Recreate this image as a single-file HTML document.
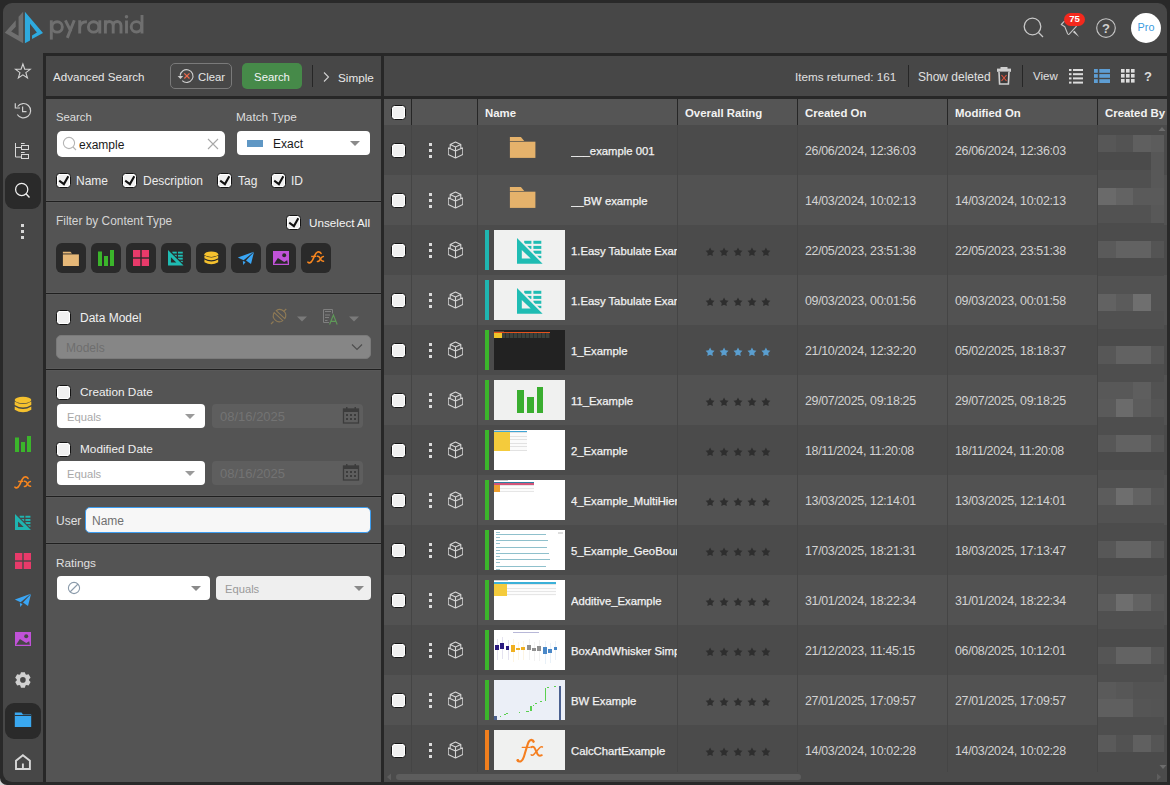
<!DOCTYPE html>
<html><head><meta charset="utf-8">
<style>
*{box-sizing:border-box;margin:0;padding:0}
html,body{width:1170px;height:785px;overflow:hidden;background:#d4d4d4;font-family:"Liberation Sans",sans-serif;font-size:12px;color:#e6e6e6}
.a{position:absolute}
#app{position:absolute;left:3px;top:3px;width:1164px;height:779px;background:#474747;border-radius:9px;overflow:hidden}
.t{position:absolute;white-space:nowrap;line-height:1}
.cb{position:absolute;width:15px;height:15px;margin:-1px 0 0 -1px;background:#f0f0f0;border:1.5px solid #141414;border-radius:3.5px;box-shadow:inset 0 0 0 1px #fff}
.ck{position:absolute;left:-1.5px;top:-1.5px}
.sep{position:absolute;background:#333}
</style></head><body>
<svg width="0" height="0" style="position:absolute"><defs><clipPath id="tabclip"><polygon points="2.4,0 26,0 26,23.6"/></clipPath></defs></svg>
<div class="a" style="left:0;top:0;width:1170px;height:785px;background:#292929;border-bottom-left-radius:7px"></div>
<div id="app"></div>

<!-- header -->
<svg class="a" style="left:0;top:0" width="50" height="50" viewBox="0 0 50 50">
  <path d="M4.8 32.7 L15.75 20.2 L15.75 26.85 L11.17 31.43 L18.56 35.76 L18.56 16.66 L23.14 11.82 L23.14 43.15 Z" fill="#6f6f6f"/>
  <path d="M24.9 11.8 L43 33 L32.06 39.07 L32.06 35.5 L36.9 32.45 L30 23.8 L30 40.6 L24.9 43.15 Z" fill="#2eaadf"/>
</svg>
<svg class="a" style="left:0;top:0" width="150" height="50" viewBox="0 0 150 50">
 <g fill="none" stroke="#6f6f6f" stroke-width="2.9">
  <path d="M51.3 20.3 V39.6"/><circle cx="57.15" cy="26.95" r="5.2"/>
  <path d="M65.4 20.3 L71 31.6 M74.3 20.3 L67.3 37.9"/>
  <path d="M79.7 20.3 V33.5 M79.7 28 C79.7 23.2 82.5 21.7 86.9 21.7"/>
  <circle cx="93.6" cy="26.95" r="5.2"/><path d="M99.8 20.3 V33.5"/>
  <path d="M105.4 20.3 V33.4 M105.4 25.4 A3.9 3.9 0 0 1 113.2 25.4 V33.4 M113.2 25.4 A3.9 3.9 0 0 1 121 25.4 V33.4"/>
  <path d="M126.5 20.5 V33.4"/>
  <circle cx="136.4" cy="26.85" r="5.2"/><path d="M142 15 V33.5"/>
 </g>
 <circle cx="126.5" cy="16.7" r="1.75" fill="#6f6f6f"/>
</svg>

<!-- header right icons -->
<svg class="a" style="left:1020px;top:14px" width="28" height="28" viewBox="0 0 28 28">
  <circle cx="12.5" cy="12.5" r="8.3" fill="none" stroke="#c8c8c8" stroke-width="1.3"/>
  <line x1="18.5" y1="18.5" x2="23" y2="23" stroke="#c8c8c8" stroke-width="1.3"/>
</svg>
<svg class="a" style="left:1056px;top:10px" width="34" height="30" viewBox="0 0 34 30">
  <path d="M8.5 11.2 L5.3 14.5 L8.8 16.8 L11.6 23.8 Q12.4 24.9 13.2 24.2 L20.6 16.2" fill="none" stroke="#c4c4c4" stroke-width="1.1" stroke-linejoin="round"/>
  <path d="M16.8 22 L18.6 20.8 L23.2 26.9 Z" fill="#d0d0d0"/>
</svg>
<div class="a" style="left:1064px;top:13px;width:21px;height:13px;border-radius:7px;background:#f3291d"></div>
<div class="t" style="left:1064px;top:14px;width:21px;text-align:center;font-size:9.6px;font-weight:bold;color:#fff">75</div>
<svg class="a" style="left:1094px;top:16px" width="24" height="24" viewBox="0 0 24 24">
  <circle cx="12" cy="12" r="9.3" fill="none" stroke="#c4c4c4" stroke-width="1.15"/>
</svg>
<div class="t" style="left:1094px;top:22px;width:24px;text-align:center;font-size:13px;font-weight:bold;color:#d0d0d0">?</div>
<div class="a" style="left:1131px;top:13px;width:30px;height:30px;border-radius:50%;background:#fff"></div>
<div class="t" style="left:1131px;top:22px;width:30px;text-align:center;font-size:10.8px;color:#3a9be0">Pro</div>


<!-- sidebar icons -->
<svg class="a" style="left:13px;top:61px" width="20" height="20" viewBox="0 0 20 20"><path d="M9.90 3.00 L11.72 8.19 L17.22 8.32 L12.85 11.66 L14.43 16.93 L9.90 13.80 L5.37 16.93 L6.95 11.66 L2.58 8.32 L8.08 8.19 Z" fill="none" stroke="#d4d4d4" stroke-width="1.1" stroke-linejoin="miter" stroke-miterlimit="10"/></svg>
<svg class="a" style="left:13px;top:101px" width="20" height="20" viewBox="0 0 20 20">
  <path d="M4.3 13.5 A7.2 7.2 0 1 0 4.6 5.5" fill="none" stroke="#d0d0d0" stroke-width="1.2"/>
  <path d="M2.3 2.3 L2.3 7 L7 7" fill="none" stroke="#d0d0d0" stroke-width="1.2"/>
  <path d="M9.6 5.5 L9.6 10.6 L13.5 10.6" fill="none" stroke="#d0d0d0" stroke-width="1.2"/>
</svg>
<svg class="a" style="left:13px;top:141px" width="20" height="20" viewBox="0 0 20 20">
  <path d="M2.5 2 L2.5 16 L8 16 M2.5 6.5 L8 6.5 M8 2.5 L11.7 2.5 M8 11.5 L11.7 11.5" fill="none" stroke="#d8d8d8" stroke-width="1"/>
  <rect x="8.5" y="4.5" width="7" height="4" fill="none" stroke="#d8d8d8" stroke-width="1"/>
  <rect x="8.5" y="13.5" width="7" height="4" fill="none" stroke="#d8d8d8" stroke-width="1"/>
</svg>
<div class="a" style="left:5px;top:173px;width:36px;height:36px;border-radius:9px;background:#2a2a2a"></div>
<svg class="a" style="left:13px;top:181px" width="20" height="20" viewBox="0 0 20 20">
  <circle cx="8.7" cy="8.4" r="6.1" fill="none" stroke="#f0f0f0" stroke-width="1.25"/>
  <line x1="13" y1="12.8" x2="16.5" y2="16.4" stroke="#f0f0f0" stroke-width="1.4"/>
</svg>
<div class="a" style="left:21px;top:224px;width:3px;height:3px;background:#d8d8d8"></div>
<div class="a" style="left:21px;top:230px;width:3px;height:3px;background:#d8d8d8"></div>
<div class="a" style="left:21px;top:236px;width:3px;height:3px;background:#d8d8d8"></div>

<svg class="a" style="left:13px;top:395px" width="20" height="20" viewBox="0 0 20 20">
  <ellipse cx="10" cy="5" rx="8.3" ry="3.3" fill="#f5c12e"/>
  <path d="M1.7 6.5 Q10 11.5 18.3 6.5 L18.3 10 Q10 15 1.7 10 Z" fill="#f5c12e"/>
  <path d="M1.7 11.5 Q10 16.5 18.3 11.5 L18.3 14.8 Q10 19.8 1.7 14.8 Z" fill="#f5c12e"/>
</svg>
<svg class="a" style="left:13px;top:434px" width="20" height="20" viewBox="0 0 20 20">
  <rect x="2" y="3.5" width="4" height="14.5" fill="#3bb52b"/>
  <rect x="8" y="8" width="4" height="10" fill="#3bb52b"/>
  <rect x="14" y="2" width="4" height="16" fill="#3bb52b"/>
</svg>
<svg class="a" style="left:10px;top:470px" width="26" height="26" viewBox="0 0 26 26">
  <path d="M5 17.2 Q6.2 18.6 8.2 17 Q9.6 15.6 11 12 Q12.8 7.6 14.6 7 Q16.8 6.4 18 8.4" fill="none" stroke="#f7861f" stroke-width="1.7" stroke-linecap="round"/>
  <path d="M8.2 11.5 L13.2 11.3" stroke="#f7861f" stroke-width="1.3"/>
  <path d="M14.3 11.3 Q16 10.6 17.2 13.5 Q18.6 16.8 20.6 16.3 M20.4 11.4 Q18.8 11.4 17.5 13.8 Q16 16.8 14.4 16.6" fill="none" stroke="#f7861f" stroke-width="1.5" stroke-linecap="round"/>
</svg>
<svg class="a" style="left:14.7px;top:514px" width="16.4" height="16.4" viewBox="0 0 25.8 25.8"><path d="M0 0 L0 25.65 L25.6 25.65 Z M4.8 12 L4.8 20.5 L13.7 20.5 Z" fill="#1fb5b0" fill-rule="evenodd"/><g clip-path="url(#tabclip)" fill="#1fb5b0"><rect x="7.2" y="2.8" width="7.2" height="3"/><rect x="16.4" y="2.8" width="7.9" height="3"/><rect x="7.2" y="7.9" width="7.2" height="3"/><rect x="16.4" y="7.9" width="7.9" height="3"/><rect x="7.2" y="12.7" width="7.2" height="3.1"/><rect x="16.4" y="12.7" width="7.9" height="3.1"/><rect x="7.2" y="17.8" width="7.2" height="2.4"/><rect x="16.4" y="17.8" width="7.9" height="2.4"/></g></svg>
<svg class="a" style="left:13px;top:551px" width="20" height="20" viewBox="0 0 20 20">
  <rect x="2" y="2" width="7.3" height="7.3" fill="#e83a6a"/>
  <rect x="10.7" y="2" width="7.3" height="7.3" fill="#e83a6a"/>
  <rect x="2" y="10.7" width="7.3" height="7.3" fill="#e83a6a"/>
  <rect x="10.7" y="10.7" width="7.3" height="7.3" fill="#e83a6a"/>
</svg>
<svg class="a" style="left:10px;top:585px" width="26" height="26" viewBox="0 0 26 26">
  <path d="M4.8 14.5 L20.8 8.8 L10.6 17.3 Z" fill="#3aa6f5"/>
  <path d="M13 17.6 L21 8.9 L18 21 Z" fill="#3aa6f5"/>
  <path d="M9.8 18.1 L12.6 19.1 L10.3 22 Z" fill="#3aa6f5"/>
</svg>
<svg class="a" style="left:10px;top:626px" width="26" height="26" viewBox="0 0 26 26">
  <rect x="5" y="6" width="16" height="14" fill="#c052d8"/>
  <path d="M6.1 18.7 L9.9 13.1 L16.2 16.9 L19.2 15.2 L19.9 18.7 Z" fill="#474747"/>
  <circle cx="16.2" cy="10.3" r="2" fill="#474747"/>
</svg>
<svg class="a" style="left:10px;top:666px" width="26" height="26" viewBox="0 0 26 26">
  <path d="M15.53 8.28 L14.84 6.14 L10.96 6.14 L10.27 8.28 L9.35 8.82 L7.15 8.34 L5.21 11.70 L6.72 13.37 L6.72 14.43 L5.21 16.10 L7.15 19.46 L9.35 18.98 L10.27 19.52 L10.96 21.66 L14.84 21.66 L15.53 19.52 L16.45 18.98 L18.65 19.46 L20.59 16.10 L19.08 14.43 L19.08 13.37 L20.59 11.70 L18.65 8.34 L16.45 8.82 Z M15.70 13.90 A2.8 2.8 0 1 0 10.10 13.90 A2.8 2.8 0 1 0 15.70 13.90 Z" fill="#d0d0d0" fill-rule="evenodd"/>
</svg>
<div class="a" style="left:5px;top:703px;width:36px;height:36px;border-radius:9px;background:#2a2a2a"></div>
<svg class="a" style="left:13px;top:710px" width="20" height="20" viewBox="0 0 20 20">
  <path d="M1.8 2.5 L8.5 2.5 L10 4.5 L18.2 4.5 L18.2 17 L1.8 17 Z" fill="#3aa8f0"/>
  <path d="M1.8 5.5 L18.2 5.5" stroke="#2a2a2a" stroke-width="0.9"/>
</svg>
<svg class="a" style="left:13px;top:752px" width="20" height="20" viewBox="0 0 20 20">
  <path d="M3 17 L3 8.7 L9.9 3.2 L16.9 8.7 L16.9 17 Z M9.9 17 L9.9 11.5" fill="none" stroke="#d8d8d8" stroke-width="1.9"/>
</svg>

<!-- dark separators -->
<div class="a" style="left:43px;top:53px;width:1124px;height:3px;background:#272727"></div>
<div class="a" style="left:43px;top:53px;width:3px;height:729px;background:#272727"></div>
<div class="a" style="left:381px;top:53px;width:3px;height:729px;background:#272727"></div>
<div class="a" style="left:43px;top:96px;width:1124px;height:3px;background:#272727"></div>

<!-- left toolbar -->
<div class="a" style="left:46px;top:56px;width:335px;height:40px;background:#474747"></div>
<div class="t" style="left:53px;top:71px;color:#e6e6e6;font-size:11.6px">Advanced Search</div>
<div class="a" style="left:170px;top:63px;width:62px;height:26px;border:1px solid #7a7a7a;border-radius:5px"></div>
<svg class="a" style="left:170px;top:63px" width="30" height="26" viewBox="0 0 30 26">
  <path d="M10.2 12.6 A6.4 6.4 0 1 1 12.2 17.7" fill="none" stroke="#cfcfcf" stroke-width="1.1"/>
  <path d="M7.6 13 L13.2 13 L10.5 16.1 Z" fill="#cfcfcf"/>
  <path d="M14.3 10.3 L19.5 15.5 M19.5 10.3 L14.3 15.5" stroke="#ef6a4c" stroke-width="1.2"/>
</svg>
<div class="t" style="left:198px;top:72px;font-size:11.3px;color:#e8e8e8">Clear</div>
<div class="a" style="left:242px;top:63px;width:60px;height:26px;background:#468a49;border-radius:5px"></div>
<div class="t" style="left:242px;top:72px;width:60px;text-align:center;font-size:11.3px;color:#f4f4f4">Search</div>
<div class="a" style="left:312px;top:65px;width:1px;height:22px;background:#262626"></div>
<svg class="a" style="left:320px;top:70px" width="12" height="14" viewBox="0 0 12 14">
  <path d="M4 2.5 L8.5 7 L4 11.5" fill="none" stroke="#d0d0d0" stroke-width="1.1"/>
</svg>
<div class="t" style="left:338px;top:72px;font-size:11.7px;color:#e8e8e8">Simple</div>

<!-- left panel -->
<div class="a" style="left:46px;top:99px;width:335px;height:683px;background:#545454"></div>
<div class="t" style="left:56px;top:112px;font-size:11.3px;color:#dedede">Search</div>
<div class="a" style="left:57px;top:131px;width:168px;height:26px;background:#fff;border-radius:5px"></div>
<svg class="a" style="left:61px;top:135px" width="18" height="18" viewBox="0 0 18 18">
  <circle cx="8" cy="8" r="5.6" fill="none" stroke="#b4b4b4" stroke-width="1.1"/>
  <line x1="12" y1="12" x2="15" y2="15" stroke="#b4b4b4" stroke-width="1.1"/>
</svg>
<div class="t" style="left:79px;top:139px;font-size:12px;color:#1a1a1a">example</div>
<svg class="a" style="left:206px;top:137px" width="14" height="14" viewBox="0 0 14 14">
  <path d="M2 2 L12 12 M12 2 L2 12" stroke="#a8a8a8" stroke-width="1.1"/>
</svg>
<div class="t" style="left:236px;top:112px;font-size:11.8px;color:#dedede">Match Type</div>
<div class="a" style="left:237px;top:131px;width:133px;height:24px;background:#fff;border-radius:4px"></div>
<div class="a" style="left:247px;top:140px;width:16px;height:7px;background:#5f97c4"></div>
<div class="t" style="left:273px;top:138px;font-size:12px;color:#1a1a1a">Exact</div>
<svg class="a" style="left:348px;top:139px" width="14" height="10" viewBox="0 0 14 10"><path d="M2 2 L12 2 L7 7 Z" fill="#8a8a8a"/></svg>

<div class="cb on" style="left:57px;top:174px"><svg class="ck" width="15" height="15" viewBox="0 0 15 15"><path d="M4.1 8.3 L7.9 11.1 L11.8 4.2" fill="none" stroke="#111" stroke-width="2.1" stroke-linecap="square"/></svg></div><div class="t" style="left:76px;top:175px;color:#ececec">Name</div>
<div class="cb on" style="left:123px;top:174px"><svg class="ck" width="15" height="15" viewBox="0 0 15 15"><path d="M4.1 8.3 L7.9 11.1 L11.8 4.2" fill="none" stroke="#111" stroke-width="2.1" stroke-linecap="square"/></svg></div><div class="t" style="left:143px;top:175px;color:#ececec">Description</div>
<div class="cb on" style="left:218px;top:174px"><svg class="ck" width="15" height="15" viewBox="0 0 15 15"><path d="M4.1 8.3 L7.9 11.1 L11.8 4.2" fill="none" stroke="#111" stroke-width="2.1" stroke-linecap="square"/></svg></div><div class="t" style="left:238px;top:175px;color:#ececec">Tag</div>
<div class="cb on" style="left:272px;top:174px"><svg class="ck" width="15" height="15" viewBox="0 0 15 15"><path d="M4.1 8.3 L7.9 11.1 L11.8 4.2" fill="none" stroke="#111" stroke-width="2.1" stroke-linecap="square"/></svg></div><div class="t" style="left:291px;top:175px;color:#ececec">ID</div>

<div class="a" style="left:46px;top:200px;width:335px;height:1px;background:#5a5a5a"></div><div class="sep" style="left:46px;top:201px;width:335px;height:1px;background:#1f1f1f"></div><div class="a" style="left:46px;top:202px;width:335px;height:1px;background:#585858"></div>
<div class="t" style="left:56px;top:216px;font-size:11.9px;color:#d4d4d4">Filter by Content Type</div>
<div class="cb on" style="left:287px;top:216px"><svg class="ck" width="15" height="15" viewBox="0 0 15 15"><path d="M4.1 8.3 L7.9 11.1 L11.8 4.2" fill="none" stroke="#111" stroke-width="2.1" stroke-linecap="square"/></svg></div><div class="t" style="left:309px;top:217px;font-size:11.7px;color:#f4f4f4">Unselect All</div>
<div class="a" style="left:56px;top:243px;width:30px;height:30px;border-radius:6px;background:#2a2a2a"></div>
<svg class="a" style="left:56px;top:243px" width="30" height="30" viewBox="0 0 30 30"><path d="M6.9 8.8 L14.4 8.8 L16 10.6 L6.9 10.6 Z" fill="#e6b878"/><rect x="6.9" y="11.4" width="16" height="11.6" fill="#e6b878"/></svg>
<div class="a" style="left:91px;top:243px;width:30px;height:30px;border-radius:6px;background:#2a2a2a"></div>
<svg class="a" style="left:96px;top:248px" width="20" height="20" viewBox="0 0 20 20"><rect x="2" y="3.5" width="4" height="14.5" fill="#3bb52b"/><rect x="8" y="8" width="4" height="10" fill="#3bb52b"/><rect x="14" y="2" width="4" height="16" fill="#3bb52b"/></svg>
<div class="a" style="left:126px;top:243px;width:30px;height:30px;border-radius:6px;background:#2a2a2a"></div>
<svg class="a" style="left:131px;top:248px" width="20" height="20" viewBox="0 0 20 20"><rect x="2" y="2" width="7.3" height="7.3" fill="#e83a6a"/><rect x="10.7" y="2" width="7.3" height="7.3" fill="#e83a6a"/><rect x="2" y="10.7" width="7.3" height="7.3" fill="#e83a6a"/><rect x="10.7" y="10.7" width="7.3" height="7.3" fill="#e83a6a"/></svg>
<div class="a" style="left:161px;top:243px;width:30px;height:30px;border-radius:6px;background:#2a2a2a"></div>
<svg class="a" style="left:168px;top:250.2px" width="15.7" height="15.7" viewBox="0 0 25.8 25.8"><path d="M0 0 L0 25.65 L25.6 25.65 Z M4.8 12 L4.8 20.5 L13.7 20.5 Z" fill="#1fbcb3" fill-rule="evenodd"/><g clip-path="url(#tabclip)" fill="#1fbcb3"><rect x="7.2" y="2.8" width="7.2" height="3"/><rect x="16.4" y="2.8" width="7.9" height="3"/><rect x="7.2" y="7.9" width="7.2" height="3"/><rect x="16.4" y="7.9" width="7.9" height="3"/><rect x="7.2" y="12.7" width="7.2" height="3.1"/><rect x="16.4" y="12.7" width="7.9" height="3.1"/><rect x="7.2" y="17.8" width="7.2" height="2.4"/><rect x="16.4" y="17.8" width="7.9" height="2.4"/></g></svg>
<div class="a" style="left:196px;top:243px;width:30px;height:30px;border-radius:6px;background:#2a2a2a"></div>
<svg class="a" style="left:202.9px;top:249.9px" width="16.6" height="16.6" viewBox="0 0 20 20"><ellipse cx="10" cy="5" rx="8.3" ry="3.3" fill="#f5c12e"/><path d="M1.7 6.5 Q10 11.5 18.3 6.5 L18.3 10 Q10 15 1.7 10 Z" fill="#f5c12e"/><path d="M1.7 11.5 Q10 16.5 18.3 11.5 L18.3 14.8 Q10 19.8 1.7 14.8 Z" fill="#f5c12e"/></svg>
<div class="a" style="left:231px;top:243px;width:30px;height:30px;border-radius:6px;background:#2a2a2a"></div>
<svg class="a" style="left:233px;top:243px" width="26" height="26" viewBox="0 0 26 26"><path d="M4.8 14.5 L20.8 8.8 L10.6 17.3 Z" fill="#3aa6f5"/><path d="M13 17.6 L21 8.9 L18 21 Z" fill="#3aa6f5"/><path d="M9.8 18.1 L12.6 19.1 L10.3 22 Z" fill="#3aa6f5"/></svg>
<div class="a" style="left:266px;top:243px;width:30px;height:30px;border-radius:6px;background:#2a2a2a"></div>
<svg class="a" style="left:268px;top:245px" width="26" height="26" viewBox="0 0 26 26"><rect x="5" y="6" width="16" height="14" fill="#c052d8"/><path d="M6.1 18.7 L9.9 13.1 L16.2 16.9 L19.2 15.2 L19.9 18.7 Z" fill="#2a2a2a"/><circle cx="16.2" cy="10.3" r="2" fill="#2a2a2a"/></svg>
<div class="a" style="left:301px;top:243px;width:30px;height:30px;border-radius:6px;background:#2a2a2a"></div>
<svg class="a" style="left:303px;top:245px" width="26" height="26" viewBox="0 0 26 26"><path d="M5 17.2 Q6.2 18.6 8.2 17 Q9.6 15.6 11 12 Q12.8 7.6 14.6 7 Q16.8 6.4 18 8.4" fill="none" stroke="#f7861f" stroke-width="1.7" stroke-linecap="round"/><path d="M8.2 11.5 L13.2 11.3" stroke="#f7861f" stroke-width="1.3"/><path d="M14.3 11.3 Q16 10.6 17.2 13.5 Q18.6 16.8 20.6 16.3 M20.4 11.4 Q18.8 11.4 17.5 13.8 Q16 16.8 14.4 16.6" fill="none" stroke="#f7861f" stroke-width="1.5" stroke-linecap="round"/></svg>

<div class="a" style="left:46px;top:292px;width:335px;height:1px;background:#5a5a5a"></div><div class="sep" style="left:46px;top:293px;width:335px;height:1px;background:#1f1f1f"></div><div class="a" style="left:46px;top:294px;width:335px;height:1px;background:#585858"></div>
<div class="cb" style="left:57px;top:311px"></div><div class="t" style="left:80px;top:312px;color:#f0f0f0">Data Model</div>
<svg class="a" style="left:266px;top:304px" width="26" height="26" viewBox="0 0 26 26">
  <g fill="none" stroke="#8f7a55" stroke-width="1.1">
  <path d="M8.2 8.6 A6 6 0 0 0 16.8 16.6 Z"/>
  <path d="M10.2 6.6 A6 6 0 0 1 18.8 14.6 Z"/>
  <path d="M17.5 7.5 L20.3 5 M7.5 17.5 L5 20"/>
  </g>
</svg>
<svg class="a" style="left:296px;top:315px" width="12" height="8" viewBox="0 0 12 8"><path d="M1 1.5 L11 1.5 L6 6.5 Z" fill="#7a7a7a"/></svg>
<svg class="a" style="left:321px;top:307px" width="18" height="19" viewBox="0 0 18 19">
  <g fill="none" stroke="#7f7f7f" stroke-width="1"><path d="M2.5 2.5 H11.5 V6.5 M2.5 2.5 V15.5 H8"/><path d="M4 4.5 H10 M4 8 H9 M4 10.5 H8 M4 13.5 H6.5"/></g>
  <path d="M8.6 17.5 L12.4 8 L16.2 17.5 M9.8 14.4 H15" fill="none" stroke="#5f9a58" stroke-width="1.1"/>
</svg>
<svg class="a" style="left:348px;top:315px" width="12" height="8" viewBox="0 0 12 8"><path d="M1 1.5 L11 1.5 L6 6.5 Z" fill="#7a7a7a"/></svg>
<div class="a" style="left:56px;top:335px;width:315px;height:24px;background:#868686;border-radius:5px;border:1px solid #7a7a7a"></div>
<div class="t" style="left:66px;top:342px;color:#6e6e6e">Models</div>
<svg class="a" style="left:349px;top:340px" width="16" height="14" viewBox="0 0 16 14"><path d="M3 4.5 L8 9.5 L13 4.5" fill="none" stroke="#4e4e4e" stroke-width="1.2"/></svg>

<div class="a" style="left:46px;top:368px;width:335px;height:1px;background:#5a5a5a"></div><div class="sep" style="left:46px;top:369px;width:335px;height:1px;background:#1f1f1f"></div><div class="a" style="left:46px;top:370px;width:335px;height:1px;background:#585858"></div>
<div class="cb" style="left:57px;top:386px"></div><div class="t" style="left:80px;top:387px;font-size:11.8px;color:#f0f0f0">Creation Date</div>
<div class="a" style="left:57px;top:404px;width:148px;height:24px;background:#fff;border-radius:4px"></div>
<div class="t" style="left:67px;top:412px;font-size:11.2px;color:#a8a8a8">Equals</div>
<svg class="a" style="left:183px;top:412px" width="14" height="10" viewBox="0 0 14 10"><path d="M2 2 L12 2 L7 7 Z" fill="#9a9a9a"/></svg>
<div class="a" style="left:212px;top:404px;width:151px;height:24px;background:#5e5e5e;border-radius:4px"></div>
<div class="t" style="left:220px;top:410px;font-size:13px;color:#737373">08/16/2025</div>
<svg class="a" style="left:342px;top:406px" width="18" height="18" viewBox="0 0 18 18">
  <g fill="#3c3c3c"><rect x="1.5" y="3" width="15" height="14" fill="none" stroke="#3c3c3c" stroke-width="1.3"/><rect x="1.5" y="3" width="15" height="3"/>
  <rect x="4" y="1" width="1.5" height="3"/><rect x="12.5" y="1" width="1.5" height="3"/>
  <rect x="4" y="8" width="2" height="2"/><rect x="8" y="8" width="2" height="2"/><rect x="12" y="8" width="2" height="2"/>
  <rect x="4" y="12" width="2" height="2"/><rect x="8" y="12" width="2" height="2"/><rect x="12" y="12" width="2" height="2"/></g>
</svg>
<div class="cb" style="left:57px;top:443px"></div><div class="t" style="left:80px;top:444px;font-size:11.8px;color:#f0f0f0">Modified Date</div>
<div class="a" style="left:57px;top:461px;width:148px;height:24px;background:#fff;border-radius:4px"></div>
<div class="t" style="left:67px;top:469px;font-size:11.2px;color:#a8a8a8">Equals</div>
<svg class="a" style="left:183px;top:469px" width="14" height="10" viewBox="0 0 14 10"><path d="M2 2 L12 2 L7 7 Z" fill="#9a9a9a"/></svg>
<div class="a" style="left:212px;top:461px;width:151px;height:24px;background:#5e5e5e;border-radius:4px"></div>
<div class="t" style="left:220px;top:467px;font-size:13px;color:#737373">08/16/2025</div>
<svg class="a" style="left:342px;top:463px" width="18" height="18" viewBox="0 0 18 18">
  <g fill="#3c3c3c"><rect x="1.5" y="3" width="15" height="14" fill="none" stroke="#3c3c3c" stroke-width="1.3"/><rect x="1.5" y="3" width="15" height="3"/>
  <rect x="4" y="1" width="1.5" height="3"/><rect x="12.5" y="1" width="1.5" height="3"/>
  <rect x="4" y="8" width="2" height="2"/><rect x="8" y="8" width="2" height="2"/><rect x="12" y="8" width="2" height="2"/>
  <rect x="4" y="12" width="2" height="2"/><rect x="8" y="12" width="2" height="2"/><rect x="12" y="12" width="2" height="2"/></g>
</svg>

<div class="a" style="left:46px;top:495px;width:335px;height:1px;background:#5a5a5a"></div><div class="sep" style="left:46px;top:496px;width:335px;height:1px;background:#1f1f1f"></div><div class="a" style="left:46px;top:497px;width:335px;height:1px;background:#585858"></div>
<div class="t" style="left:56px;top:515px;color:#e0e0e0">User</div>
<div class="a" style="left:85px;top:507px;width:286px;height:26px;background:#f7f7f7;border:1px solid #3d9df0;border-radius:5px"></div>
<div class="t" style="left:92px;top:515px;color:#707070">Name</div>

<div class="a" style="left:46px;top:542px;width:335px;height:1px;background:#5a5a5a"></div><div class="sep" style="left:46px;top:543px;width:335px;height:1px;background:#1f1f1f"></div><div class="a" style="left:46px;top:544px;width:335px;height:1px;background:#585858"></div>
<div class="t" style="left:56px;top:558px;font-size:11.8px;color:#e0e0e0">Ratings</div>
<div class="a" style="left:57px;top:576px;width:153px;height:24px;background:#fff;border-radius:4px"></div>
<svg class="a" style="left:66px;top:580px" width="16" height="16" viewBox="0 0 16 16"><circle cx="8" cy="8" r="5.6" fill="none" stroke="#8a9aaa" stroke-width="1.1"/><path d="M4 12 L12 4" stroke="#8a9aaa" stroke-width="1.1"/></svg>
<svg class="a" style="left:189px;top:584px" width="14" height="10" viewBox="0 0 14 10"><path d="M2 2 L12 2 L7 7 Z" fill="#8a8a8a"/></svg>
<div class="a" style="left:216px;top:576px;width:155px;height:24px;background:#efefef;border-radius:4px"></div>
<div class="t" style="left:225px;top:584px;font-size:11.2px;color:#9a9a9a">Equals</div>
<svg class="a" style="left:352px;top:584px" width="14" height="10" viewBox="0 0 14 10"><path d="M2 2 L12 2 L7 7 Z" fill="#8a8a8a"/></svg>


<!-- results toolbar -->
<div class="a" style="left:384px;top:56px;width:783px;height:40px;background:#474747"></div>
<div class="t" style="left:795px;top:71px;font-size:11.7px;color:#e0e0e0">Items returned: 161</div>
<div class="a" style="left:908px;top:65px;width:1px;height:22px;background:#262626"></div>
<div class="t" style="left:918px;top:71px;font-size:12px;color:#e0e0e0">Show deleted</div>
<svg class="a" style="left:996px;top:67px" width="16" height="18" viewBox="0 0 16 18">
  <rect x="1" y="1.6" width="14" height="3.2" fill="#cfcfcf"/>
  <rect x="4.5" y="0" width="7" height="2" fill="#cfcfcf"/>
  <path d="M3 4.8 L3.6 17 L12.4 17 L13 4.8" fill="#3a3a3a" stroke="#cfcfcf" stroke-width="1.6"/>
  <path d="M5.5 8 L10.5 14 M10.5 8 L5.5 14" stroke="#e0553f" stroke-width="1.1"/>
</svg>
<div class="a" style="left:1022px;top:65px;width:1px;height:22px;background:#262626"></div>
<div class="t" style="left:1033px;top:71px;font-size:11.5px;color:#e0e0e0">View</div>
<svg class="a" style="left:1068px;top:68px" width="16" height="16" viewBox="0 0 16 16">
  <g fill="#dcdcdc">
  <rect x="1" y="1" width="2.5" height="2"/><rect x="5" y="1" width="10" height="2"/>
  <rect x="1" y="5.2" width="2.5" height="2"/><rect x="5" y="5.2" width="10" height="2"/>
  <rect x="1" y="9.4" width="2.5" height="2"/><rect x="5" y="9.4" width="10" height="2"/>
  <rect x="1" y="13.6" width="2.5" height="2"/><rect x="5" y="13.6" width="10" height="2"/>
  </g>
</svg>
<svg class="a" style="left:1093px;top:68px" width="18" height="16" viewBox="0 0 18 16">
  <g fill="#5e9ed4">
  <rect x="1" y="1" width="3.8" height="3.8"/><rect x="6.3" y="1" width="10.7" height="3.8"/>
  <rect x="1" y="6.1" width="3.8" height="3.7"/><rect x="6.3" y="6.1" width="10.7" height="3.7"/>
  <rect x="1" y="11.2" width="3.8" height="3.8"/><rect x="6.3" y="11.2" width="10.7" height="3.8"/>
  </g>
</svg>
<svg class="a" style="left:1120px;top:68px" width="16" height="16" viewBox="0 0 16 16">
  <g fill="#dcdcdc">
  <rect x="1" y="1" width="3.6" height="3.6"/><rect x="6" y="1" width="3.6" height="3.6"/><rect x="11" y="1" width="3.6" height="3.6"/>
  <rect x="1" y="6" width="3.6" height="3.6"/><rect x="6" y="6" width="3.6" height="3.6"/><rect x="11" y="6" width="3.6" height="3.6"/>
  <rect x="1" y="11" width="3.6" height="3.6"/><rect x="6" y="11" width="3.6" height="3.6"/><rect x="11" y="11" width="3.6" height="3.6"/>
  </g>
</svg>
<div class="t" style="left:1144px;top:70px;font-size:13px;font-weight:bold;color:#dcdcdc">?</div>

<!-- table -->
<!--TABLE-->
<div class="a" style="left:384px;top:99px;width:783px;height:683px;background:#4c4c4c"></div>
<div class="a" style="left:384px;top:125px;width:783px;height:50px;background:#4b4b4b"></div>
<div class="a" style="left:384px;top:175px;width:783px;height:50px;background:#525252"></div>
<div class="a" style="left:384px;top:225px;width:783px;height:50px;background:#4b4b4b"></div>
<div class="a" style="left:384px;top:275px;width:783px;height:50px;background:#525252"></div>
<div class="a" style="left:384px;top:325px;width:783px;height:50px;background:#4b4b4b"></div>
<div class="a" style="left:384px;top:375px;width:783px;height:50px;background:#525252"></div>
<div class="a" style="left:384px;top:425px;width:783px;height:50px;background:#4b4b4b"></div>
<div class="a" style="left:384px;top:475px;width:783px;height:50px;background:#525252"></div>
<div class="a" style="left:384px;top:525px;width:783px;height:50px;background:#4b4b4b"></div>
<div class="a" style="left:384px;top:575px;width:783px;height:50px;background:#525252"></div>
<div class="a" style="left:384px;top:625px;width:783px;height:50px;background:#4b4b4b"></div>
<div class="a" style="left:384px;top:675px;width:783px;height:50px;background:#525252"></div>
<div class="a" style="left:384px;top:725px;width:783px;height:50px;background:#4b4b4b"></div>
<div class="a" style="left:411px;top:125px;width:1px;height:647px;background:#454545"></div>
<div class="a" style="left:477px;top:125px;width:1px;height:647px;background:#454545"></div>
<div class="a" style="left:677px;top:125px;width:1px;height:647px;background:#454545"></div>
<div class="a" style="left:797px;top:125px;width:1px;height:647px;background:#454545"></div>
<div class="a" style="left:947px;top:125px;width:1px;height:647px;background:#454545"></div>
<div class="a" style="left:1097px;top:125px;width:1px;height:647px;background:#454545"></div>
<div class="a" style="left:384px;top:99px;width:783px;height:26px;background:#555555"></div>
<div class="a" style="left:411px;top:99px;width:1px;height:26px;background:#262626"></div>
<div class="a" style="left:477px;top:99px;width:1px;height:26px;background:#262626"></div>
<div class="a" style="left:677px;top:99px;width:1px;height:26px;background:#262626"></div>
<div class="a" style="left:797px;top:99px;width:1px;height:26px;background:#262626"></div>
<div class="a" style="left:947px;top:99px;width:1px;height:26px;background:#262626"></div>
<div class="a" style="left:1097px;top:99px;width:1px;height:26px;background:#262626"></div>
<div class="cb" style="left:392px;top:106px"></div>
<div class="t" style="left:485px;top:108px;font-weight:bold;font-size:11.4px;color:#f2f2f2">Name</div>
<div class="t" style="left:685px;top:108px;font-weight:bold;font-size:11.4px;color:#f2f2f2">Overall Rating</div>
<div class="t" style="left:805px;top:108px;font-weight:bold;font-size:11.4px;color:#f2f2f2">Created On</div>
<div class="t" style="left:955px;top:108px;font-weight:bold;font-size:11.4px;color:#f2f2f2">Modified On</div>
<div class="t" style="left:1105px;top:108px;font-weight:bold;font-size:11.4px;color:#f2f2f2">Created By</div>
<div class="cb" style="left:392px;top:144px"></div>
<div class="a" style="left:429px;top:143px;width:3px;height:3px;background:#dcdcdc"></div><div class="a" style="left:429px;top:149px;width:3px;height:3px;background:#dcdcdc"></div><div class="a" style="left:429px;top:155px;width:3px;height:3px;background:#dcdcdc"></div>
<svg class="a" style="left:448px;top:141px" width="15" height="18" viewBox="0 0 15 18"><path d="M7.5 1.1 L12.8 3.6 L7.5 6.1 L2.2 3.6 Z M2.2 3.6 V7.4 M12.8 3.6 V7.4 M0.2 6.8 L7.5 10 L14.8 6.8 M0.2 6.8 V13.6 L7.5 16.9 L14.8 13.6 V6.8 M7.5 6.1 V16.9" fill="none" stroke="#d4d4d4" stroke-width="1.1" stroke-linejoin="round"/></svg>
<svg class="a" style="left:509px;top:136px" width="28" height="24" viewBox="0 0 28 24"><path d="M0.9 1.1 L11.9 1.1 L15.2 5 L0.9 5 Z" fill="#e5b26b"/><rect x="0.9" y="5.7" width="25.5" height="16.2" fill="#e5b26b"/></svg>
<div class="a" style="left:571px;top:146px;width:106px;height:16px;overflow:hidden"><div class="t" style="left:0;top:0;font-size:11.3px;color:#f2f2f2;-webkit-text-stroke:0.25px #f2f2f2">___example 001</div></div>
<div class="t" style="left:805px;top:145px;font-size:12.4px;letter-spacing:-0.32px;color:#d2d2d2">26/06/2024, 12:36:03</div>
<div class="t" style="left:955px;top:145px;font-size:12.4px;letter-spacing:-0.32px;color:#d2d2d2">26/06/2024, 12:36:03</div>
<div class="cb" style="left:392px;top:194px"></div>
<div class="a" style="left:429px;top:193px;width:3px;height:3px;background:#dcdcdc"></div><div class="a" style="left:429px;top:199px;width:3px;height:3px;background:#dcdcdc"></div><div class="a" style="left:429px;top:205px;width:3px;height:3px;background:#dcdcdc"></div>
<svg class="a" style="left:448px;top:191px" width="15" height="18" viewBox="0 0 15 18"><path d="M7.5 1.1 L12.8 3.6 L7.5 6.1 L2.2 3.6 Z M2.2 3.6 V7.4 M12.8 3.6 V7.4 M0.2 6.8 L7.5 10 L14.8 6.8 M0.2 6.8 V13.6 L7.5 16.9 L14.8 13.6 V6.8 M7.5 6.1 V16.9" fill="none" stroke="#d4d4d4" stroke-width="1.1" stroke-linejoin="round"/></svg>
<svg class="a" style="left:509px;top:186px" width="28" height="24" viewBox="0 0 28 24"><path d="M0.9 1.1 L11.9 1.1 L15.2 5 L0.9 5 Z" fill="#e5b26b"/><rect x="0.9" y="5.7" width="25.5" height="16.2" fill="#e5b26b"/></svg>
<div class="a" style="left:571px;top:196px;width:106px;height:16px;overflow:hidden"><div class="t" style="left:0;top:0;font-size:11.3px;color:#f2f2f2;-webkit-text-stroke:0.25px #f2f2f2">__BW example</div></div>
<div class="t" style="left:805px;top:195px;font-size:12.4px;letter-spacing:-0.32px;color:#d2d2d2">14/03/2024, 10:02:13</div>
<div class="t" style="left:955px;top:195px;font-size:12.4px;letter-spacing:-0.32px;color:#d2d2d2">14/03/2024, 10:02:13</div>
<div class="cb" style="left:392px;top:244px"></div>
<div class="a" style="left:429px;top:243px;width:3px;height:3px;background:#dcdcdc"></div><div class="a" style="left:429px;top:249px;width:3px;height:3px;background:#dcdcdc"></div><div class="a" style="left:429px;top:255px;width:3px;height:3px;background:#dcdcdc"></div>
<svg class="a" style="left:448px;top:241px" width="15" height="18" viewBox="0 0 15 18"><path d="M7.5 1.1 L12.8 3.6 L7.5 6.1 L2.2 3.6 Z M2.2 3.6 V7.4 M12.8 3.6 V7.4 M0.2 6.8 L7.5 10 L14.8 6.8 M0.2 6.8 V13.6 L7.5 16.9 L14.8 13.6 V6.8 M7.5 6.1 V16.9" fill="none" stroke="#d4d4d4" stroke-width="1.1" stroke-linejoin="round"/></svg>
<div class="a" style="left:485px;top:230px;width:4px;height:40px;background:#1fb5b0"></div>
<div class="a" style="left:494px;top:230px;width:71px;height:40px;background:#f0f1f0;overflow:hidden"><svg class="a" style="left:22.9px;top:7.6px" width="26" height="26" viewBox="0 0 26 26"><path d="M0 0 L0 25.65 L25.6 25.65 Z M4.8 12 L4.8 20.5 L13.7 20.5 Z" fill="#1fbcb3" fill-rule="evenodd"/><g clip-path="url(#tabclip)" fill="#1fbcb3"><rect x="7.2" y="2.8" width="7.2" height="3"/><rect x="16.4" y="2.8" width="7.9" height="3"/><rect x="7.2" y="7.9" width="7.2" height="3"/><rect x="16.4" y="7.9" width="7.9" height="3"/><rect x="7.2" y="12.7" width="7.2" height="3.1"/><rect x="16.4" y="12.7" width="7.9" height="3.1"/><rect x="7.2" y="17.8" width="7.2" height="2.4"/><rect x="16.4" y="17.8" width="7.9" height="2.4"/></g></svg></div>
<div class="a" style="left:571px;top:246px;width:106px;height:16px;overflow:hidden"><div class="t" style="left:0;top:0;font-size:11.3px;color:#f2f2f2;-webkit-text-stroke:0.25px #f2f2f2">1.Easy Tabulate Example</div></div>
<svg class="a" style="left:705px;top:247px" width="72" height="11" viewBox="0 0 72 11"><path d="M5.10 0.50 L6.54 3.22 L9.57 3.75 L7.43 5.96 L7.86 9.00 L5.10 7.65 L2.34 9.00 L2.77 5.96 L0.63 3.75 L3.66 3.22 Z" fill="#2e2e2e"/><path d="M19.05 0.50 L20.49 3.22 L23.52 3.75 L21.38 5.96 L21.81 9.00 L19.05 7.65 L16.29 9.00 L16.72 5.96 L14.58 3.75 L17.61 3.22 Z" fill="#2e2e2e"/><path d="M33.00 0.50 L34.44 3.22 L37.47 3.75 L35.33 5.96 L35.76 9.00 L33.00 7.65 L30.24 9.00 L30.67 5.96 L28.53 3.75 L31.56 3.22 Z" fill="#2e2e2e"/><path d="M46.95 0.50 L48.39 3.22 L51.42 3.75 L49.28 5.96 L49.71 9.00 L46.95 7.65 L44.19 9.00 L44.62 5.96 L42.48 3.75 L45.51 3.22 Z" fill="#2e2e2e"/><path d="M60.90 0.50 L62.34 3.22 L65.37 3.75 L63.23 5.96 L63.66 9.00 L60.90 7.65 L58.14 9.00 L58.57 5.96 L56.43 3.75 L59.46 3.22 Z" fill="#2e2e2e"/></svg>
<div class="t" style="left:805px;top:245px;font-size:12.4px;letter-spacing:-0.32px;color:#d2d2d2">22/05/2023, 23:51:38</div>
<div class="t" style="left:955px;top:245px;font-size:12.4px;letter-spacing:-0.32px;color:#d2d2d2">22/05/2023, 23:51:38</div>
<div class="cb" style="left:392px;top:294px"></div>
<div class="a" style="left:429px;top:293px;width:3px;height:3px;background:#dcdcdc"></div><div class="a" style="left:429px;top:299px;width:3px;height:3px;background:#dcdcdc"></div><div class="a" style="left:429px;top:305px;width:3px;height:3px;background:#dcdcdc"></div>
<svg class="a" style="left:448px;top:291px" width="15" height="18" viewBox="0 0 15 18"><path d="M7.5 1.1 L12.8 3.6 L7.5 6.1 L2.2 3.6 Z M2.2 3.6 V7.4 M12.8 3.6 V7.4 M0.2 6.8 L7.5 10 L14.8 6.8 M0.2 6.8 V13.6 L7.5 16.9 L14.8 13.6 V6.8 M7.5 6.1 V16.9" fill="none" stroke="#d4d4d4" stroke-width="1.1" stroke-linejoin="round"/></svg>
<div class="a" style="left:485px;top:280px;width:4px;height:40px;background:#1fb5b0"></div>
<div class="a" style="left:494px;top:280px;width:71px;height:40px;background:#f0f1f0;overflow:hidden"><svg class="a" style="left:22.9px;top:7.6px" width="26" height="26" viewBox="0 0 26 26"><path d="M0 0 L0 25.65 L25.6 25.65 Z M4.8 12 L4.8 20.5 L13.7 20.5 Z" fill="#1fbcb3" fill-rule="evenodd"/><g clip-path="url(#tabclip)" fill="#1fbcb3"><rect x="7.2" y="2.8" width="7.2" height="3"/><rect x="16.4" y="2.8" width="7.9" height="3"/><rect x="7.2" y="7.9" width="7.2" height="3"/><rect x="16.4" y="7.9" width="7.9" height="3"/><rect x="7.2" y="12.7" width="7.2" height="3.1"/><rect x="16.4" y="12.7" width="7.9" height="3.1"/><rect x="7.2" y="17.8" width="7.2" height="2.4"/><rect x="16.4" y="17.8" width="7.9" height="2.4"/></g></svg></div>
<div class="a" style="left:571px;top:296px;width:106px;height:16px;overflow:hidden"><div class="t" style="left:0;top:0;font-size:11.3px;color:#f2f2f2;-webkit-text-stroke:0.25px #f2f2f2">1.Easy Tabulate Example</div></div>
<svg class="a" style="left:705px;top:297px" width="72" height="11" viewBox="0 0 72 11"><path d="M5.10 0.50 L6.54 3.22 L9.57 3.75 L7.43 5.96 L7.86 9.00 L5.10 7.65 L2.34 9.00 L2.77 5.96 L0.63 3.75 L3.66 3.22 Z" fill="#2e2e2e"/><path d="M19.05 0.50 L20.49 3.22 L23.52 3.75 L21.38 5.96 L21.81 9.00 L19.05 7.65 L16.29 9.00 L16.72 5.96 L14.58 3.75 L17.61 3.22 Z" fill="#2e2e2e"/><path d="M33.00 0.50 L34.44 3.22 L37.47 3.75 L35.33 5.96 L35.76 9.00 L33.00 7.65 L30.24 9.00 L30.67 5.96 L28.53 3.75 L31.56 3.22 Z" fill="#2e2e2e"/><path d="M46.95 0.50 L48.39 3.22 L51.42 3.75 L49.28 5.96 L49.71 9.00 L46.95 7.65 L44.19 9.00 L44.62 5.96 L42.48 3.75 L45.51 3.22 Z" fill="#2e2e2e"/><path d="M60.90 0.50 L62.34 3.22 L65.37 3.75 L63.23 5.96 L63.66 9.00 L60.90 7.65 L58.14 9.00 L58.57 5.96 L56.43 3.75 L59.46 3.22 Z" fill="#2e2e2e"/></svg>
<div class="t" style="left:805px;top:295px;font-size:12.4px;letter-spacing:-0.32px;color:#d2d2d2">09/03/2023, 00:01:56</div>
<div class="t" style="left:955px;top:295px;font-size:12.4px;letter-spacing:-0.32px;color:#d2d2d2">09/03/2023, 00:01:58</div>
<div class="cb" style="left:392px;top:344px"></div>
<div class="a" style="left:429px;top:343px;width:3px;height:3px;background:#dcdcdc"></div><div class="a" style="left:429px;top:349px;width:3px;height:3px;background:#dcdcdc"></div><div class="a" style="left:429px;top:355px;width:3px;height:3px;background:#dcdcdc"></div>
<svg class="a" style="left:448px;top:341px" width="15" height="18" viewBox="0 0 15 18"><path d="M7.5 1.1 L12.8 3.6 L7.5 6.1 L2.2 3.6 Z M2.2 3.6 V7.4 M12.8 3.6 V7.4 M0.2 6.8 L7.5 10 L14.8 6.8 M0.2 6.8 V13.6 L7.5 16.9 L14.8 13.6 V6.8 M7.5 6.1 V16.9" fill="none" stroke="#d4d4d4" stroke-width="1.1" stroke-linejoin="round"/></svg>
<div class="a" style="left:485px;top:330px;width:4px;height:40px;background:#3bb52b"></div>
<div class="a" style="left:494px;top:330px;width:71px;height:40px;background:#222222;overflow:hidden"><div class="a" style="left:0px;top:1px;width:10px;height:1px;background:#5a4a3a"></div><div class="a" style="left:0px;top:2px;width:56px;height:1.3px;background:#e5521c"></div><div class="a" style="left:0px;top:3.2px;width:8px;height:5px;background:#efc52a"></div><div class="a" style="left:8px;top:3.2px;width:48px;height:5px;background:repeating-linear-gradient(90deg,#3c423c 0 3px,#2c2f2c 3px 4px)"></div></div>
<div class="a" style="left:571px;top:346px;width:106px;height:16px;overflow:hidden"><div class="t" style="left:0;top:0;font-size:11.3px;color:#f2f2f2;-webkit-text-stroke:0.25px #f2f2f2">1_Example</div></div>
<svg class="a" style="left:705px;top:347px" width="72" height="11" viewBox="0 0 72 11"><path d="M5.10 0.50 L6.54 3.22 L9.57 3.75 L7.43 5.96 L7.86 9.00 L5.10 7.65 L2.34 9.00 L2.77 5.96 L0.63 3.75 L3.66 3.22 Z" fill="#5a9ecf"/><path d="M19.05 0.50 L20.49 3.22 L23.52 3.75 L21.38 5.96 L21.81 9.00 L19.05 7.65 L16.29 9.00 L16.72 5.96 L14.58 3.75 L17.61 3.22 Z" fill="#5a9ecf"/><path d="M33.00 0.50 L34.44 3.22 L37.47 3.75 L35.33 5.96 L35.76 9.00 L33.00 7.65 L30.24 9.00 L30.67 5.96 L28.53 3.75 L31.56 3.22 Z" fill="#5a9ecf"/><path d="M46.95 0.50 L48.39 3.22 L51.42 3.75 L49.28 5.96 L49.71 9.00 L46.95 7.65 L44.19 9.00 L44.62 5.96 L42.48 3.75 L45.51 3.22 Z" fill="#5a9ecf"/><path d="M60.90 0.50 L62.34 3.22 L65.37 3.75 L63.23 5.96 L63.66 9.00 L60.90 7.65 L58.14 9.00 L58.57 5.96 L56.43 3.75 L59.46 3.22 Z" fill="#5a9ecf"/></svg>
<div class="t" style="left:805px;top:345px;font-size:12.4px;letter-spacing:-0.32px;color:#d2d2d2">21/10/2024, 12:32:20</div>
<div class="t" style="left:955px;top:345px;font-size:12.4px;letter-spacing:-0.32px;color:#d2d2d2">05/02/2025, 18:18:37</div>
<div class="cb" style="left:392px;top:394px"></div>
<div class="a" style="left:429px;top:393px;width:3px;height:3px;background:#dcdcdc"></div><div class="a" style="left:429px;top:399px;width:3px;height:3px;background:#dcdcdc"></div><div class="a" style="left:429px;top:405px;width:3px;height:3px;background:#dcdcdc"></div>
<svg class="a" style="left:448px;top:391px" width="15" height="18" viewBox="0 0 15 18"><path d="M7.5 1.1 L12.8 3.6 L7.5 6.1 L2.2 3.6 Z M2.2 3.6 V7.4 M12.8 3.6 V7.4 M0.2 6.8 L7.5 10 L14.8 6.8 M0.2 6.8 V13.6 L7.5 16.9 L14.8 13.6 V6.8 M7.5 6.1 V16.9" fill="none" stroke="#d4d4d4" stroke-width="1.1" stroke-linejoin="round"/></svg>
<div class="a" style="left:485px;top:380px;width:4px;height:40px;background:#3bb52b"></div>
<div class="a" style="left:494px;top:380px;width:71px;height:40px;background:#f0f1f0;overflow:hidden"><div class="a" style="left:23px;top:10px;width:6.5px;height:23px;background:#3aae30"></div><div class="a" style="left:33px;top:16.5px;width:6.5px;height:16.5px;background:#3aae30"></div><div class="a" style="left:42.5px;top:7px;width:6.5px;height:26px;background:#3aae30"></div></div>
<div class="a" style="left:571px;top:396px;width:106px;height:16px;overflow:hidden"><div class="t" style="left:0;top:0;font-size:11.3px;color:#f2f2f2;-webkit-text-stroke:0.25px #f2f2f2">11_Example</div></div>
<svg class="a" style="left:705px;top:397px" width="72" height="11" viewBox="0 0 72 11"><path d="M5.10 0.50 L6.54 3.22 L9.57 3.75 L7.43 5.96 L7.86 9.00 L5.10 7.65 L2.34 9.00 L2.77 5.96 L0.63 3.75 L3.66 3.22 Z" fill="#2e2e2e"/><path d="M19.05 0.50 L20.49 3.22 L23.52 3.75 L21.38 5.96 L21.81 9.00 L19.05 7.65 L16.29 9.00 L16.72 5.96 L14.58 3.75 L17.61 3.22 Z" fill="#2e2e2e"/><path d="M33.00 0.50 L34.44 3.22 L37.47 3.75 L35.33 5.96 L35.76 9.00 L33.00 7.65 L30.24 9.00 L30.67 5.96 L28.53 3.75 L31.56 3.22 Z" fill="#2e2e2e"/><path d="M46.95 0.50 L48.39 3.22 L51.42 3.75 L49.28 5.96 L49.71 9.00 L46.95 7.65 L44.19 9.00 L44.62 5.96 L42.48 3.75 L45.51 3.22 Z" fill="#2e2e2e"/><path d="M60.90 0.50 L62.34 3.22 L65.37 3.75 L63.23 5.96 L63.66 9.00 L60.90 7.65 L58.14 9.00 L58.57 5.96 L56.43 3.75 L59.46 3.22 Z" fill="#2e2e2e"/></svg>
<div class="t" style="left:805px;top:395px;font-size:12.4px;letter-spacing:-0.32px;color:#d2d2d2">29/07/2025, 09:18:25</div>
<div class="t" style="left:955px;top:395px;font-size:12.4px;letter-spacing:-0.32px;color:#d2d2d2">29/07/2025, 09:18:25</div>
<div class="cb" style="left:392px;top:444px"></div>
<div class="a" style="left:429px;top:443px;width:3px;height:3px;background:#dcdcdc"></div><div class="a" style="left:429px;top:449px;width:3px;height:3px;background:#dcdcdc"></div><div class="a" style="left:429px;top:455px;width:3px;height:3px;background:#dcdcdc"></div>
<svg class="a" style="left:448px;top:441px" width="15" height="18" viewBox="0 0 15 18"><path d="M7.5 1.1 L12.8 3.6 L7.5 6.1 L2.2 3.6 Z M2.2 3.6 V7.4 M12.8 3.6 V7.4 M0.2 6.8 L7.5 10 L14.8 6.8 M0.2 6.8 V13.6 L7.5 16.9 L14.8 13.6 V6.8 M7.5 6.1 V16.9" fill="none" stroke="#d4d4d4" stroke-width="1.1" stroke-linejoin="round"/></svg>
<div class="a" style="left:485px;top:430px;width:4px;height:40px;background:#3bb52b"></div>
<div class="a" style="left:494px;top:430px;width:71px;height:40px;background:#ffffff;overflow:hidden"><div class="a" style="left:0px;top:0px;width:16px;height:0.8px;background:#cfcfcf"></div><div class="a" style="left:0px;top:1.4px;width:32.8px;height:1px;background:#3fa6d6"></div><div class="a" style="left:0px;top:2.4px;width:15.7px;height:18.6px;background:#f4cb3c"></div><div class="a" style="left:15.7px;top:2.4px;width:17px;height:18.6px;background:repeating-linear-gradient(#e2e2e2 0 1px,#fbfbfb 1px 3.6px)"></div></div>
<div class="a" style="left:571px;top:446px;width:106px;height:16px;overflow:hidden"><div class="t" style="left:0;top:0;font-size:11.3px;color:#f2f2f2;-webkit-text-stroke:0.25px #f2f2f2">2_Example</div></div>
<svg class="a" style="left:705px;top:447px" width="72" height="11" viewBox="0 0 72 11"><path d="M5.10 0.50 L6.54 3.22 L9.57 3.75 L7.43 5.96 L7.86 9.00 L5.10 7.65 L2.34 9.00 L2.77 5.96 L0.63 3.75 L3.66 3.22 Z" fill="#2e2e2e"/><path d="M19.05 0.50 L20.49 3.22 L23.52 3.75 L21.38 5.96 L21.81 9.00 L19.05 7.65 L16.29 9.00 L16.72 5.96 L14.58 3.75 L17.61 3.22 Z" fill="#2e2e2e"/><path d="M33.00 0.50 L34.44 3.22 L37.47 3.75 L35.33 5.96 L35.76 9.00 L33.00 7.65 L30.24 9.00 L30.67 5.96 L28.53 3.75 L31.56 3.22 Z" fill="#2e2e2e"/><path d="M46.95 0.50 L48.39 3.22 L51.42 3.75 L49.28 5.96 L49.71 9.00 L46.95 7.65 L44.19 9.00 L44.62 5.96 L42.48 3.75 L45.51 3.22 Z" fill="#2e2e2e"/><path d="M60.90 0.50 L62.34 3.22 L65.37 3.75 L63.23 5.96 L63.66 9.00 L60.90 7.65 L58.14 9.00 L58.57 5.96 L56.43 3.75 L59.46 3.22 Z" fill="#2e2e2e"/></svg>
<div class="t" style="left:805px;top:445px;font-size:12.4px;letter-spacing:-0.32px;color:#d2d2d2">18/11/2024, 11:20:08</div>
<div class="t" style="left:955px;top:445px;font-size:12.4px;letter-spacing:-0.32px;color:#d2d2d2">18/11/2024, 11:20:08</div>
<div class="cb" style="left:392px;top:494px"></div>
<div class="a" style="left:429px;top:493px;width:3px;height:3px;background:#dcdcdc"></div><div class="a" style="left:429px;top:499px;width:3px;height:3px;background:#dcdcdc"></div><div class="a" style="left:429px;top:505px;width:3px;height:3px;background:#dcdcdc"></div>
<svg class="a" style="left:448px;top:491px" width="15" height="18" viewBox="0 0 15 18"><path d="M7.5 1.1 L12.8 3.6 L7.5 6.1 L2.2 3.6 Z M2.2 3.6 V7.4 M12.8 3.6 V7.4 M0.2 6.8 L7.5 10 L14.8 6.8 M0.2 6.8 V13.6 L7.5 16.9 L14.8 13.6 V6.8 M7.5 6.1 V16.9" fill="none" stroke="#d4d4d4" stroke-width="1.1" stroke-linejoin="round"/></svg>
<div class="a" style="left:485px;top:480px;width:4px;height:40px;background:#3bb52b"></div>
<div class="a" style="left:494px;top:480px;width:71px;height:40px;background:#ffffff;overflow:hidden"><div class="a" style="left:0px;top:0px;width:14px;height:0.8px;background:#cfcfcf"></div><div class="a" style="left:0px;top:2px;width:40px;height:1.4px;background:#2d7fa2"></div><div class="a" style="left:0px;top:3.4px;width:40px;height:1.4px;background:#d35478"></div><div class="a" style="left:0px;top:4.8px;width:6px;height:7.5px;background:#f0a030"></div><div class="a" style="left:6px;top:4.8px;width:34px;height:7.5px;background:repeating-linear-gradient(#e6e6e6 0 1px,#fcfcfc 1px 3px)"></div></div>
<div class="a" style="left:571px;top:496px;width:106px;height:16px;overflow:hidden"><div class="t" style="left:0;top:0;font-size:11.3px;color:#f2f2f2;-webkit-text-stroke:0.25px #f2f2f2">4_Example_MultiHierarchy</div></div>
<svg class="a" style="left:705px;top:497px" width="72" height="11" viewBox="0 0 72 11"><path d="M5.10 0.50 L6.54 3.22 L9.57 3.75 L7.43 5.96 L7.86 9.00 L5.10 7.65 L2.34 9.00 L2.77 5.96 L0.63 3.75 L3.66 3.22 Z" fill="#2e2e2e"/><path d="M19.05 0.50 L20.49 3.22 L23.52 3.75 L21.38 5.96 L21.81 9.00 L19.05 7.65 L16.29 9.00 L16.72 5.96 L14.58 3.75 L17.61 3.22 Z" fill="#2e2e2e"/><path d="M33.00 0.50 L34.44 3.22 L37.47 3.75 L35.33 5.96 L35.76 9.00 L33.00 7.65 L30.24 9.00 L30.67 5.96 L28.53 3.75 L31.56 3.22 Z" fill="#2e2e2e"/><path d="M46.95 0.50 L48.39 3.22 L51.42 3.75 L49.28 5.96 L49.71 9.00 L46.95 7.65 L44.19 9.00 L44.62 5.96 L42.48 3.75 L45.51 3.22 Z" fill="#2e2e2e"/><path d="M60.90 0.50 L62.34 3.22 L65.37 3.75 L63.23 5.96 L63.66 9.00 L60.90 7.65 L58.14 9.00 L58.57 5.96 L56.43 3.75 L59.46 3.22 Z" fill="#2e2e2e"/></svg>
<div class="t" style="left:805px;top:495px;font-size:12.4px;letter-spacing:-0.32px;color:#d2d2d2">13/03/2025, 12:14:01</div>
<div class="t" style="left:955px;top:495px;font-size:12.4px;letter-spacing:-0.32px;color:#d2d2d2">13/03/2025, 12:14:01</div>
<div class="cb" style="left:392px;top:544px"></div>
<div class="a" style="left:429px;top:543px;width:3px;height:3px;background:#dcdcdc"></div><div class="a" style="left:429px;top:549px;width:3px;height:3px;background:#dcdcdc"></div><div class="a" style="left:429px;top:555px;width:3px;height:3px;background:#dcdcdc"></div>
<svg class="a" style="left:448px;top:541px" width="15" height="18" viewBox="0 0 15 18"><path d="M7.5 1.1 L12.8 3.6 L7.5 6.1 L2.2 3.6 Z M2.2 3.6 V7.4 M12.8 3.6 V7.4 M0.2 6.8 L7.5 10 L14.8 6.8 M0.2 6.8 V13.6 L7.5 16.9 L14.8 13.6 V6.8 M7.5 6.1 V16.9" fill="none" stroke="#d4d4d4" stroke-width="1.1" stroke-linejoin="round"/></svg>
<div class="a" style="left:485px;top:530px;width:4px;height:40px;background:#3bb52b"></div>
<div class="a" style="left:494px;top:530px;width:71px;height:40px;background:#ffffff;overflow:hidden"><div class="a" style="left:2px;top:4.1px;width:50.3px;height:1.1px;background:#8fc0cc"></div><div class="a" style="left:2px;top:10.3px;width:51.8px;height:1.1px;background:#8fc0cc"></div><div class="a" style="left:2px;top:16.8px;width:50.8px;height:1.1px;background:#8fc0cc"></div><div class="a" style="left:2px;top:23.2px;width:52.8px;height:1.1px;background:#8fc0cc"></div><div class="a" style="left:2px;top:29.4px;width:54.2px;height:1.1px;background:#8fc0cc"></div><div class="a" style="left:2px;top:36.2px;width:49.6px;height:1.1px;background:#8fc0cc"></div><div class="a" style="left:2px;top:2.4px;width:4px;height:0.9px;background:#9ac4d0"></div><div class="a" style="left:2px;top:7.2px;width:4px;height:0.9px;background:#9ac4d0"></div><div class="a" style="left:2px;top:13.2px;width:4px;height:0.9px;background:#9ac4d0"></div><div class="a" style="left:2px;top:19.5px;width:4px;height:0.9px;background:#9ac4d0"></div><div class="a" style="left:2px;top:26.2px;width:4px;height:0.9px;background:#9ac4d0"></div><div class="a" style="left:2px;top:31.5px;width:4px;height:0.9px;background:#9ac4d0"></div><div class="a" style="left:2px;top:39px;width:4px;height:0.9px;background:#9ac4d0"></div><div class="a" style="left:64px;top:1.5px;width:5px;height:2.5px;background:#ddd"></div></div>
<div class="a" style="left:571px;top:546px;width:106px;height:16px;overflow:hidden"><div class="t" style="left:0;top:0;font-size:11.3px;color:#f2f2f2;-webkit-text-stroke:0.25px #f2f2f2">5_Example_GeoBoundaries</div></div>
<svg class="a" style="left:705px;top:547px" width="72" height="11" viewBox="0 0 72 11"><path d="M5.10 0.50 L6.54 3.22 L9.57 3.75 L7.43 5.96 L7.86 9.00 L5.10 7.65 L2.34 9.00 L2.77 5.96 L0.63 3.75 L3.66 3.22 Z" fill="#2e2e2e"/><path d="M19.05 0.50 L20.49 3.22 L23.52 3.75 L21.38 5.96 L21.81 9.00 L19.05 7.65 L16.29 9.00 L16.72 5.96 L14.58 3.75 L17.61 3.22 Z" fill="#2e2e2e"/><path d="M33.00 0.50 L34.44 3.22 L37.47 3.75 L35.33 5.96 L35.76 9.00 L33.00 7.65 L30.24 9.00 L30.67 5.96 L28.53 3.75 L31.56 3.22 Z" fill="#2e2e2e"/><path d="M46.95 0.50 L48.39 3.22 L51.42 3.75 L49.28 5.96 L49.71 9.00 L46.95 7.65 L44.19 9.00 L44.62 5.96 L42.48 3.75 L45.51 3.22 Z" fill="#2e2e2e"/><path d="M60.90 0.50 L62.34 3.22 L65.37 3.75 L63.23 5.96 L63.66 9.00 L60.90 7.65 L58.14 9.00 L58.57 5.96 L56.43 3.75 L59.46 3.22 Z" fill="#2e2e2e"/></svg>
<div class="t" style="left:805px;top:545px;font-size:12.4px;letter-spacing:-0.32px;color:#d2d2d2">17/03/2025, 18:21:31</div>
<div class="t" style="left:955px;top:545px;font-size:12.4px;letter-spacing:-0.32px;color:#d2d2d2">18/03/2025, 17:13:47</div>
<div class="cb" style="left:392px;top:594px"></div>
<div class="a" style="left:429px;top:593px;width:3px;height:3px;background:#dcdcdc"></div><div class="a" style="left:429px;top:599px;width:3px;height:3px;background:#dcdcdc"></div><div class="a" style="left:429px;top:605px;width:3px;height:3px;background:#dcdcdc"></div>
<svg class="a" style="left:448px;top:591px" width="15" height="18" viewBox="0 0 15 18"><path d="M7.5 1.1 L12.8 3.6 L7.5 6.1 L2.2 3.6 Z M2.2 3.6 V7.4 M12.8 3.6 V7.4 M0.2 6.8 L7.5 10 L14.8 6.8 M0.2 6.8 V13.6 L7.5 16.9 L14.8 13.6 V6.8 M7.5 6.1 V16.9" fill="none" stroke="#d4d4d4" stroke-width="1.1" stroke-linejoin="round"/></svg>
<div class="a" style="left:485px;top:580px;width:4px;height:40px;background:#3bb52b"></div>
<div class="a" style="left:494px;top:580px;width:71px;height:40px;background:#ffffff;overflow:hidden"><div class="a" style="left:0px;top:0px;width:14px;height:0.8px;background:#cfcfcf"></div><div class="a" style="left:0px;top:2.05px;width:61.9px;height:2px;background:#3ab0d8"></div><div class="a" style="left:0px;top:4.1px;width:12.6px;height:11.6px;background:#f4cb3c"></div><div class="a" style="left:12.6px;top:4.1px;width:49.3px;height:11.6px;background:repeating-linear-gradient(#e6e6e6 0 1px,#fcfcfc 1px 3.5px)"></div></div>
<div class="a" style="left:571px;top:596px;width:106px;height:16px;overflow:hidden"><div class="t" style="left:0;top:0;font-size:11.3px;color:#f2f2f2;-webkit-text-stroke:0.25px #f2f2f2">Additive_Example</div></div>
<svg class="a" style="left:705px;top:597px" width="72" height="11" viewBox="0 0 72 11"><path d="M5.10 0.50 L6.54 3.22 L9.57 3.75 L7.43 5.96 L7.86 9.00 L5.10 7.65 L2.34 9.00 L2.77 5.96 L0.63 3.75 L3.66 3.22 Z" fill="#2e2e2e"/><path d="M19.05 0.50 L20.49 3.22 L23.52 3.75 L21.38 5.96 L21.81 9.00 L19.05 7.65 L16.29 9.00 L16.72 5.96 L14.58 3.75 L17.61 3.22 Z" fill="#2e2e2e"/><path d="M33.00 0.50 L34.44 3.22 L37.47 3.75 L35.33 5.96 L35.76 9.00 L33.00 7.65 L30.24 9.00 L30.67 5.96 L28.53 3.75 L31.56 3.22 Z" fill="#2e2e2e"/><path d="M46.95 0.50 L48.39 3.22 L51.42 3.75 L49.28 5.96 L49.71 9.00 L46.95 7.65 L44.19 9.00 L44.62 5.96 L42.48 3.75 L45.51 3.22 Z" fill="#2e2e2e"/><path d="M60.90 0.50 L62.34 3.22 L65.37 3.75 L63.23 5.96 L63.66 9.00 L60.90 7.65 L58.14 9.00 L58.57 5.96 L56.43 3.75 L59.46 3.22 Z" fill="#2e2e2e"/></svg>
<div class="t" style="left:805px;top:595px;font-size:12.4px;letter-spacing:-0.32px;color:#d2d2d2">31/01/2024, 18:22:34</div>
<div class="t" style="left:955px;top:595px;font-size:12.4px;letter-spacing:-0.32px;color:#d2d2d2">31/01/2024, 18:22:34</div>
<div class="cb" style="left:392px;top:644px"></div>
<div class="a" style="left:429px;top:643px;width:3px;height:3px;background:#dcdcdc"></div><div class="a" style="left:429px;top:649px;width:3px;height:3px;background:#dcdcdc"></div><div class="a" style="left:429px;top:655px;width:3px;height:3px;background:#dcdcdc"></div>
<svg class="a" style="left:448px;top:641px" width="15" height="18" viewBox="0 0 15 18"><path d="M7.5 1.1 L12.8 3.6 L7.5 6.1 L2.2 3.6 Z M2.2 3.6 V7.4 M12.8 3.6 V7.4 M0.2 6.8 L7.5 10 L14.8 6.8 M0.2 6.8 V13.6 L7.5 16.9 L14.8 13.6 V6.8 M7.5 6.1 V16.9" fill="none" stroke="#d4d4d4" stroke-width="1.1" stroke-linejoin="round"/></svg>
<div class="a" style="left:485px;top:630px;width:4px;height:40px;background:#3bb52b"></div>
<div class="a" style="left:494px;top:630px;width:71px;height:40px;background:#ffffff;overflow:hidden"><div class="a" style="left:18.8px;top:2px;width:26px;height:0.9px;background:#b8b8d8"></div><div class="a" style="left:2.9px;top:9.0px;width:0.6px;height:20.8px;background:#2a1a80;opacity:0.12"></div><div class="a" style="left:1px;top:15px;width:3.8px;height:4.8px;background:#2a1a80"></div><div class="a" style="left:8.1px;top:7.0px;width:0.6px;height:21.5px;background:#2a1a80;opacity:0.12"></div><div class="a" style="left:6.2px;top:13px;width:3.8px;height:5.5px;background:#2a1a80"></div><div class="a" style="left:13.5px;top:10.0px;width:0.6px;height:20.2px;background:#2a1a80;opacity:0.12"></div><div class="a" style="left:11.6px;top:16px;width:3.8px;height:4.2px;background:#2a1a80"></div><div class="a" style="left:19.0px;top:9.0px;width:0.6px;height:22.5px;background:#f0b020;opacity:0.12"></div><div class="a" style="left:17.1px;top:15px;width:3.8px;height:6.5px;background:#f0b020"></div><div class="a" style="left:24.1px;top:11.8px;width:0.6px;height:18.0px;background:#f0b020;opacity:0.12"></div><div class="a" style="left:22.2px;top:17.8px;width:3.8px;height:2.0px;background:#f0b020"></div><div class="a" style="left:29.4px;top:11.1px;width:0.6px;height:19.1px;background:#f0b020;opacity:0.12"></div><div class="a" style="left:27.4px;top:17.1px;width:4.0px;height:3.1px;background:#f0b020"></div><div class="a" style="left:34.8px;top:8.7px;width:0.6px;height:21.8px;background:#909090;opacity:0.12"></div><div class="a" style="left:32.8px;top:14.7px;width:4.1px;height:5.8px;background:#909090"></div><div class="a" style="left:39.9px;top:12.1px;width:0.6px;height:18.8px;background:#909090;opacity:0.12"></div><div class="a" style="left:38px;top:18.1px;width:3.7px;height:2.8px;background:#909090"></div><div class="a" style="left:45.2px;top:10.1px;width:0.6px;height:21.4px;background:#909090;opacity:0.12"></div><div class="a" style="left:43.1px;top:16.1px;width:4.1px;height:5.4px;background:#909090"></div><div class="a" style="left:50.8px;top:11.4px;width:0.6px;height:22.5px;background:#4a88c8;opacity:0.12"></div><div class="a" style="left:48.9px;top:17.4px;width:3.8px;height:6.5px;background:#4a88c8"></div><div class="a" style="left:55.9px;top:12.8px;width:0.6px;height:20.1px;background:#4a88c8;opacity:0.12"></div><div class="a" style="left:54px;top:18.8px;width:3.8px;height:4.1px;background:#4a88c8"></div><div class="a" style="left:61.4px;top:10.8px;width:0.6px;height:19.0px;background:#4a88c8;opacity:0.12"></div><div class="a" style="left:59.5px;top:16.8px;width:3.7px;height:3.0px;background:#4a88c8"></div></div>
<div class="a" style="left:571px;top:646px;width:106px;height:16px;overflow:hidden"><div class="t" style="left:0;top:0;font-size:11.3px;color:#f2f2f2;-webkit-text-stroke:0.25px #f2f2f2">BoxAndWhisker Simple</div></div>
<svg class="a" style="left:705px;top:647px" width="72" height="11" viewBox="0 0 72 11"><path d="M5.10 0.50 L6.54 3.22 L9.57 3.75 L7.43 5.96 L7.86 9.00 L5.10 7.65 L2.34 9.00 L2.77 5.96 L0.63 3.75 L3.66 3.22 Z" fill="#2e2e2e"/><path d="M19.05 0.50 L20.49 3.22 L23.52 3.75 L21.38 5.96 L21.81 9.00 L19.05 7.65 L16.29 9.00 L16.72 5.96 L14.58 3.75 L17.61 3.22 Z" fill="#2e2e2e"/><path d="M33.00 0.50 L34.44 3.22 L37.47 3.75 L35.33 5.96 L35.76 9.00 L33.00 7.65 L30.24 9.00 L30.67 5.96 L28.53 3.75 L31.56 3.22 Z" fill="#2e2e2e"/><path d="M46.95 0.50 L48.39 3.22 L51.42 3.75 L49.28 5.96 L49.71 9.00 L46.95 7.65 L44.19 9.00 L44.62 5.96 L42.48 3.75 L45.51 3.22 Z" fill="#2e2e2e"/><path d="M60.90 0.50 L62.34 3.22 L65.37 3.75 L63.23 5.96 L63.66 9.00 L60.90 7.65 L58.14 9.00 L58.57 5.96 L56.43 3.75 L59.46 3.22 Z" fill="#2e2e2e"/></svg>
<div class="t" style="left:805px;top:645px;font-size:12.4px;letter-spacing:-0.32px;color:#d2d2d2">21/12/2023, 11:45:15</div>
<div class="t" style="left:955px;top:645px;font-size:12.4px;letter-spacing:-0.32px;color:#d2d2d2">06/08/2025, 10:12:01</div>
<div class="cb" style="left:392px;top:694px"></div>
<div class="a" style="left:429px;top:693px;width:3px;height:3px;background:#dcdcdc"></div><div class="a" style="left:429px;top:699px;width:3px;height:3px;background:#dcdcdc"></div><div class="a" style="left:429px;top:705px;width:3px;height:3px;background:#dcdcdc"></div>
<svg class="a" style="left:448px;top:691px" width="15" height="18" viewBox="0 0 15 18"><path d="M7.5 1.1 L12.8 3.6 L7.5 6.1 L2.2 3.6 Z M2.2 3.6 V7.4 M12.8 3.6 V7.4 M0.2 6.8 L7.5 10 L14.8 6.8 M0.2 6.8 V13.6 L7.5 16.9 L14.8 13.6 V6.8 M7.5 6.1 V16.9" fill="none" stroke="#d4d4d4" stroke-width="1.1" stroke-linejoin="round"/></svg>
<div class="a" style="left:485px;top:680px;width:4px;height:40px;background:#3bb52b"></div>
<div class="a" style="left:494px;top:680px;width:71px;height:40px;background:#ebeff7;overflow:hidden"><div class="a" style="left:0.3px;top:36.2px;width:2.4px;height:4.5px;background:#4a6090"></div><div class="a" style="left:64.6px;top:6.2px;width:2.4px;height:34.5px;background:#4a6090"></div><div class="a" style="left:5.5px;top:35.5px;width:1.4px;height:1.1px;background:#5ad050"></div><div class="a" style="left:9.9px;top:34.2px;width:2.1px;height:1.0px;background:#5ad050"></div><div class="a" style="left:12.3px;top:32.8px;width:1.7px;height:0.7px;background:#5ad050"></div><div class="a" style="left:24.6px;top:31.8px;width:1.4px;height:0.7px;background:#5ad050"></div><div class="a" style="left:31.8px;top:31.1px;width:3.7px;height:0.5px;background:#5ad050"></div><div class="a" style="left:36.2px;top:26px;width:1.8px;height:4.8px;background:#5ad050"></div><div class="a" style="left:38.7px;top:24.5px;width:1.8px;height:1.4px;background:#5ad050"></div><div class="a" style="left:41px;top:23.1px;width:1.8px;height:1.1px;background:#5ad050"></div><div class="a" style="left:50.6px;top:8.2px;width:1.7px;height:13.3px;background:#5ad050"></div><div class="a" style="left:53px;top:6.8px;width:1.7px;height:1.1px;background:#5ad050"></div><div class="a" style="left:60.2px;top:6.2px;width:1.7px;height:0.8px;background:#5ad050"></div><div class="a" style="left:46px;top:21px;width:2.0px;height:0.6px;background:#5ad050"></div></div>
<div class="a" style="left:571px;top:696px;width:106px;height:16px;overflow:hidden"><div class="t" style="left:0;top:0;font-size:11.3px;color:#f2f2f2;-webkit-text-stroke:0.25px #f2f2f2">BW Example</div></div>
<svg class="a" style="left:705px;top:697px" width="72" height="11" viewBox="0 0 72 11"><path d="M5.10 0.50 L6.54 3.22 L9.57 3.75 L7.43 5.96 L7.86 9.00 L5.10 7.65 L2.34 9.00 L2.77 5.96 L0.63 3.75 L3.66 3.22 Z" fill="#2e2e2e"/><path d="M19.05 0.50 L20.49 3.22 L23.52 3.75 L21.38 5.96 L21.81 9.00 L19.05 7.65 L16.29 9.00 L16.72 5.96 L14.58 3.75 L17.61 3.22 Z" fill="#2e2e2e"/><path d="M33.00 0.50 L34.44 3.22 L37.47 3.75 L35.33 5.96 L35.76 9.00 L33.00 7.65 L30.24 9.00 L30.67 5.96 L28.53 3.75 L31.56 3.22 Z" fill="#2e2e2e"/><path d="M46.95 0.50 L48.39 3.22 L51.42 3.75 L49.28 5.96 L49.71 9.00 L46.95 7.65 L44.19 9.00 L44.62 5.96 L42.48 3.75 L45.51 3.22 Z" fill="#2e2e2e"/><path d="M60.90 0.50 L62.34 3.22 L65.37 3.75 L63.23 5.96 L63.66 9.00 L60.90 7.65 L58.14 9.00 L58.57 5.96 L56.43 3.75 L59.46 3.22 Z" fill="#2e2e2e"/></svg>
<div class="t" style="left:805px;top:695px;font-size:12.4px;letter-spacing:-0.32px;color:#d2d2d2">27/01/2025, 17:09:57</div>
<div class="t" style="left:955px;top:695px;font-size:12.4px;letter-spacing:-0.32px;color:#d2d2d2">27/01/2025, 17:09:57</div>
<div class="cb" style="left:392px;top:744px"></div>
<div class="a" style="left:429px;top:743px;width:3px;height:3px;background:#dcdcdc"></div><div class="a" style="left:429px;top:749px;width:3px;height:3px;background:#dcdcdc"></div><div class="a" style="left:429px;top:755px;width:3px;height:3px;background:#dcdcdc"></div>
<svg class="a" style="left:448px;top:741px" width="15" height="18" viewBox="0 0 15 18"><path d="M7.5 1.1 L12.8 3.6 L7.5 6.1 L2.2 3.6 Z M2.2 3.6 V7.4 M12.8 3.6 V7.4 M0.2 6.8 L7.5 10 L14.8 6.8 M0.2 6.8 V13.6 L7.5 16.9 L14.8 13.6 V6.8 M7.5 6.1 V16.9" fill="none" stroke="#d4d4d4" stroke-width="1.1" stroke-linejoin="round"/></svg>
<div class="a" style="left:485px;top:730px;width:4px;height:40px;background:#f07f1e"></div>
<div class="a" style="left:494px;top:730px;width:71px;height:40px;background:#f0f1f0;overflow:hidden"><svg class="a" style="left:0;top:0" width="71" height="40" viewBox="0 0 71 40"><g fill="none" stroke="#f57f20" stroke-linecap="round"><path d="M23.6 30.2 Q24.4 32 26.6 31.4 Q29.2 30.4 31 23 L33.6 14.6 Q35 10 37.4 9.9 Q39.2 9.9 39.6 11.6" stroke-width="2.1"/><path d="M28.2 17.3 L35.8 17.3" stroke-width="1.3"/><path d="M37.2 17.2 Q39.6 15.6 41.2 19.2 L43.6 24.2 Q45 26.6 47.8 25.2" stroke-width="2"/><path d="M48.4 17 Q46.8 16.4 45 18.4 L40 24.2 Q38.6 25.8 37.2 24.8" stroke-width="1.5"/><circle cx="23.9" cy="30.4" r="1.3" fill="#f57f20" stroke="none"/><circle cx="39.4" cy="11.7" r="1.1" fill="#f57f20" stroke="none"/></g></svg></div>
<div class="a" style="left:571px;top:746px;width:106px;height:16px;overflow:hidden"><div class="t" style="left:0;top:0;font-size:11.3px;color:#f2f2f2;-webkit-text-stroke:0.25px #f2f2f2">CalcChartExample</div></div>
<svg class="a" style="left:705px;top:747px" width="72" height="11" viewBox="0 0 72 11"><path d="M5.10 0.50 L6.54 3.22 L9.57 3.75 L7.43 5.96 L7.86 9.00 L5.10 7.65 L2.34 9.00 L2.77 5.96 L0.63 3.75 L3.66 3.22 Z" fill="#2e2e2e"/><path d="M19.05 0.50 L20.49 3.22 L23.52 3.75 L21.38 5.96 L21.81 9.00 L19.05 7.65 L16.29 9.00 L16.72 5.96 L14.58 3.75 L17.61 3.22 Z" fill="#2e2e2e"/><path d="M33.00 0.50 L34.44 3.22 L37.47 3.75 L35.33 5.96 L35.76 9.00 L33.00 7.65 L30.24 9.00 L30.67 5.96 L28.53 3.75 L31.56 3.22 Z" fill="#2e2e2e"/><path d="M46.95 0.50 L48.39 3.22 L51.42 3.75 L49.28 5.96 L49.71 9.00 L46.95 7.65 L44.19 9.00 L44.62 5.96 L42.48 3.75 L45.51 3.22 Z" fill="#2e2e2e"/><path d="M60.90 0.50 L62.34 3.22 L65.37 3.75 L63.23 5.96 L63.66 9.00 L60.90 7.65 L58.14 9.00 L58.57 5.96 L56.43 3.75 L59.46 3.22 Z" fill="#2e2e2e"/></svg>
<div class="t" style="left:805px;top:745px;font-size:12.4px;letter-spacing:-0.32px;color:#d2d2d2">14/03/2024, 10:02:28</div>
<div class="t" style="left:955px;top:745px;font-size:12.4px;letter-spacing:-0.32px;color:#d2d2d2">14/03/2024, 10:02:28</div>
<div class="a" style="left:1098px;top:135px;width:18px;height:17px;background:#575757"></div>
<div class="a" style="left:1116px;top:135px;width:17px;height:17px;background:#535353"></div>
<div class="a" style="left:1133px;top:135px;width:18px;height:17px;background:#5f5f5f"></div>
<div class="a" style="left:1151px;top:135px;width:13px;height:17px;background:#5c5c5c"></div>
<div class="a" style="left:1098px;top:152px;width:18px;height:18px;background:#4b4b4b"></div>
<div class="a" style="left:1116px;top:152px;width:17px;height:18px;background:#4b4b4b"></div>
<div class="a" style="left:1133px;top:152px;width:18px;height:18px;background:#4b4b4b"></div>
<div class="a" style="left:1151px;top:152px;width:13px;height:18px;background:#575757"></div>
<div class="a" style="left:1098px;top:170px;width:18px;height:18px;background:#505050"></div>
<div class="a" style="left:1116px;top:170px;width:17px;height:18px;background:#505050"></div>
<div class="a" style="left:1133px;top:170px;width:18px;height:18px;background:#505050"></div>
<div class="a" style="left:1151px;top:170px;width:13px;height:18px;background:#585858"></div>
<div class="a" style="left:1098px;top:188px;width:18px;height:17px;background:#6a6a6a"></div>
<div class="a" style="left:1116px;top:188px;width:17px;height:17px;background:#636363"></div>
<div class="a" style="left:1133px;top:188px;width:18px;height:17px;background:#5a5a5a"></div>
<div class="a" style="left:1151px;top:188px;width:13px;height:17px;background:#5a5a5a"></div>
<div class="a" style="left:1098px;top:205px;width:18px;height:18px;background:#525252"></div>
<div class="a" style="left:1116px;top:205px;width:17px;height:18px;background:#525252"></div>
<div class="a" style="left:1133px;top:205px;width:18px;height:18px;background:#525252"></div>
<div class="a" style="left:1151px;top:205px;width:13px;height:18px;background:#585858"></div>
<div class="a" style="left:1098px;top:223px;width:18px;height:18px;background:#4c4c4c"></div>
<div class="a" style="left:1116px;top:223px;width:17px;height:18px;background:#4c4c4c"></div>
<div class="a" style="left:1133px;top:223px;width:18px;height:18px;background:#4c4c4c"></div>
<div class="a" style="left:1151px;top:223px;width:13px;height:18px;background:#4c4c4c"></div>
<div class="a" style="left:1098px;top:241px;width:18px;height:17px;background:#5a5a5a"></div>
<div class="a" style="left:1116px;top:241px;width:17px;height:17px;background:#626262"></div>
<div class="a" style="left:1133px;top:241px;width:18px;height:17px;background:#626262"></div>
<div class="a" style="left:1151px;top:241px;width:13px;height:17px;background:#545454"></div>
<div class="a" style="left:1098px;top:258px;width:18px;height:18px;background:#4b4b4b"></div>
<div class="a" style="left:1116px;top:258px;width:17px;height:18px;background:#4b4b4b"></div>
<div class="a" style="left:1133px;top:258px;width:18px;height:18px;background:#4b4b4b"></div>
<div class="a" style="left:1151px;top:258px;width:13px;height:18px;background:#4b4b4b"></div>
<div class="a" style="left:1098px;top:276px;width:18px;height:18px;background:#525252"></div>
<div class="a" style="left:1116px;top:276px;width:17px;height:18px;background:#525252"></div>
<div class="a" style="left:1133px;top:276px;width:18px;height:18px;background:#525252"></div>
<div class="a" style="left:1151px;top:276px;width:13px;height:18px;background:#525252"></div>
<div class="a" style="left:1098px;top:294px;width:18px;height:17px;background:#626262"></div>
<div class="a" style="left:1116px;top:294px;width:17px;height:17px;background:#5b5b5b"></div>
<div class="a" style="left:1133px;top:294px;width:18px;height:17px;background:#6f6f6f"></div>
<div class="a" style="left:1151px;top:294px;width:13px;height:17px;background:#525252"></div>
<div class="a" style="left:1098px;top:311px;width:18px;height:18px;background:#505050"></div>
<div class="a" style="left:1116px;top:311px;width:17px;height:18px;background:#505050"></div>
<div class="a" style="left:1133px;top:311px;width:18px;height:18px;background:#505050"></div>
<div class="a" style="left:1151px;top:311px;width:13px;height:18px;background:#505050"></div>
<div class="a" style="left:1098px;top:329px;width:18px;height:17px;background:#4b4b4b"></div>
<div class="a" style="left:1116px;top:329px;width:17px;height:17px;background:#4b4b4b"></div>
<div class="a" style="left:1133px;top:329px;width:18px;height:17px;background:#4b4b4b"></div>
<div class="a" style="left:1151px;top:329px;width:13px;height:17px;background:#4b4b4b"></div>
<div class="a" style="left:1098px;top:346px;width:18px;height:18px;background:#575757"></div>
<div class="a" style="left:1116px;top:346px;width:17px;height:18px;background:#626262"></div>
<div class="a" style="left:1133px;top:346px;width:18px;height:18px;background:#626262"></div>
<div class="a" style="left:1151px;top:346px;width:13px;height:18px;background:#565656"></div>
<div class="a" style="left:1098px;top:364px;width:18px;height:18px;background:#4e4e4e"></div>
<div class="a" style="left:1116px;top:364px;width:17px;height:18px;background:#4e4e4e"></div>
<div class="a" style="left:1133px;top:364px;width:18px;height:18px;background:#4e4e4e"></div>
<div class="a" style="left:1151px;top:364px;width:13px;height:18px;background:#4e4e4e"></div>
<div class="a" style="left:1098px;top:382px;width:18px;height:17px;background:#585858"></div>
<div class="a" style="left:1116px;top:382px;width:17px;height:17px;background:#585858"></div>
<div class="a" style="left:1133px;top:382px;width:18px;height:17px;background:#5e5e5e"></div>
<div class="a" style="left:1151px;top:382px;width:13px;height:17px;background:#525252"></div>
<div class="a" style="left:1098px;top:399px;width:18px;height:18px;background:#5a5a5a"></div>
<div class="a" style="left:1116px;top:399px;width:17px;height:18px;background:#6b6b6b"></div>
<div class="a" style="left:1133px;top:399px;width:18px;height:18px;background:#5c5c5c"></div>
<div class="a" style="left:1151px;top:399px;width:13px;height:18px;background:#555555"></div>
<div class="a" style="left:1098px;top:417px;width:18px;height:18px;background:#4e4e4e"></div>
<div class="a" style="left:1116px;top:417px;width:17px;height:18px;background:#4e4e4e"></div>
<div class="a" style="left:1133px;top:417px;width:18px;height:18px;background:#4e4e4e"></div>
<div class="a" style="left:1151px;top:417px;width:13px;height:18px;background:#4e4e4e"></div>
<div class="a" style="left:1098px;top:435px;width:18px;height:17px;background:#575757"></div>
<div class="a" style="left:1116px;top:435px;width:17px;height:17px;background:#626262"></div>
<div class="a" style="left:1133px;top:435px;width:18px;height:17px;background:#626262"></div>
<div class="a" style="left:1151px;top:435px;width:13px;height:17px;background:#555555"></div>
<div class="a" style="left:1098px;top:452px;width:18px;height:18px;background:#4b4b4b"></div>
<div class="a" style="left:1116px;top:452px;width:17px;height:18px;background:#4b4b4b"></div>
<div class="a" style="left:1133px;top:452px;width:18px;height:18px;background:#4b4b4b"></div>
<div class="a" style="left:1151px;top:452px;width:13px;height:18px;background:#4b4b4b"></div>
<div class="a" style="left:1098px;top:470px;width:18px;height:18px;background:#505050"></div>
<div class="a" style="left:1116px;top:470px;width:17px;height:18px;background:#505050"></div>
<div class="a" style="left:1133px;top:470px;width:18px;height:18px;background:#505050"></div>
<div class="a" style="left:1151px;top:470px;width:13px;height:18px;background:#505050"></div>
<div class="a" style="left:1098px;top:488px;width:18px;height:17px;background:#5c5c5c"></div>
<div class="a" style="left:1116px;top:488px;width:17px;height:17px;background:#6e6e6e"></div>
<div class="a" style="left:1133px;top:488px;width:18px;height:17px;background:#626262"></div>
<div class="a" style="left:1151px;top:488px;width:13px;height:17px;background:#565656"></div>
<div class="a" style="left:1098px;top:505px;width:18px;height:18px;background:#525252"></div>
<div class="a" style="left:1116px;top:505px;width:17px;height:18px;background:#525252"></div>
<div class="a" style="left:1133px;top:505px;width:18px;height:18px;background:#525252"></div>
<div class="a" style="left:1151px;top:505px;width:13px;height:18px;background:#525252"></div>
<div class="a" style="left:1098px;top:523px;width:18px;height:18px;background:#4c4c4c"></div>
<div class="a" style="left:1116px;top:523px;width:17px;height:18px;background:#4c4c4c"></div>
<div class="a" style="left:1133px;top:523px;width:18px;height:18px;background:#4c4c4c"></div>
<div class="a" style="left:1151px;top:523px;width:13px;height:18px;background:#4c4c4c"></div>
<div class="a" style="left:1098px;top:541px;width:18px;height:17px;background:#575757"></div>
<div class="a" style="left:1116px;top:541px;width:17px;height:17px;background:#646464"></div>
<div class="a" style="left:1133px;top:541px;width:18px;height:17px;background:#646464"></div>
<div class="a" style="left:1151px;top:541px;width:13px;height:17px;background:#565656"></div>
<div class="a" style="left:1098px;top:558px;width:18px;height:18px;background:#4b4b4b"></div>
<div class="a" style="left:1116px;top:558px;width:17px;height:18px;background:#4b4b4b"></div>
<div class="a" style="left:1133px;top:558px;width:18px;height:18px;background:#4b4b4b"></div>
<div class="a" style="left:1151px;top:558px;width:13px;height:18px;background:#4b4b4b"></div>
<div class="a" style="left:1098px;top:576px;width:18px;height:18px;background:#525252"></div>
<div class="a" style="left:1116px;top:576px;width:17px;height:18px;background:#525252"></div>
<div class="a" style="left:1133px;top:576px;width:18px;height:18px;background:#525252"></div>
<div class="a" style="left:1151px;top:576px;width:13px;height:18px;background:#525252"></div>
<div class="a" style="left:1098px;top:594px;width:18px;height:17px;background:#5c5c5c"></div>
<div class="a" style="left:1116px;top:594px;width:17px;height:17px;background:#6e6e6e"></div>
<div class="a" style="left:1133px;top:594px;width:18px;height:17px;background:#626262"></div>
<div class="a" style="left:1151px;top:594px;width:13px;height:17px;background:#565656"></div>
<div class="a" style="left:1098px;top:611px;width:18px;height:18px;background:#505050"></div>
<div class="a" style="left:1116px;top:611px;width:17px;height:18px;background:#505050"></div>
<div class="a" style="left:1133px;top:611px;width:18px;height:18px;background:#505050"></div>
<div class="a" style="left:1151px;top:611px;width:13px;height:18px;background:#505050"></div>
<div class="a" style="left:1098px;top:629px;width:18px;height:18px;background:#4b4b4b"></div>
<div class="a" style="left:1116px;top:629px;width:17px;height:18px;background:#4b4b4b"></div>
<div class="a" style="left:1133px;top:629px;width:18px;height:18px;background:#4b4b4b"></div>
<div class="a" style="left:1151px;top:629px;width:13px;height:18px;background:#4b4b4b"></div>
<div class="a" style="left:1098px;top:647px;width:18px;height:17px;background:#555555"></div>
<div class="a" style="left:1116px;top:647px;width:17px;height:17px;background:#636363"></div>
<div class="a" style="left:1133px;top:647px;width:18px;height:17px;background:#636363"></div>
<div class="a" style="left:1151px;top:647px;width:13px;height:17px;background:#565656"></div>
<div class="a" style="left:1098px;top:664px;width:18px;height:18px;background:#4e4e4e"></div>
<div class="a" style="left:1116px;top:664px;width:17px;height:18px;background:#4e4e4e"></div>
<div class="a" style="left:1133px;top:664px;width:18px;height:18px;background:#4e4e4e"></div>
<div class="a" style="left:1151px;top:664px;width:13px;height:18px;background:#4e4e4e"></div>
<div class="a" style="left:1098px;top:682px;width:18px;height:17px;background:#5a5a5a"></div>
<div class="a" style="left:1116px;top:682px;width:17px;height:17px;background:#575757"></div>
<div class="a" style="left:1133px;top:682px;width:18px;height:17px;background:#535353"></div>
<div class="a" style="left:1151px;top:682px;width:13px;height:17px;background:#535353"></div>
<div class="a" style="left:1098px;top:699px;width:18px;height:18px;background:#5f5f5f"></div>
<div class="a" style="left:1116px;top:699px;width:17px;height:18px;background:#5f5f5f"></div>
<div class="a" style="left:1133px;top:699px;width:18px;height:18px;background:#555555"></div>
<div class="a" style="left:1151px;top:699px;width:13px;height:18px;background:#545454"></div>
<div class="a" style="left:1098px;top:717px;width:18px;height:18px;background:#4e4e4e"></div>
<div class="a" style="left:1116px;top:717px;width:17px;height:18px;background:#4e4e4e"></div>
<div class="a" style="left:1133px;top:717px;width:18px;height:18px;background:#4e4e4e"></div>
<div class="a" style="left:1151px;top:717px;width:13px;height:18px;background:#4e4e4e"></div>
<div class="a" style="left:1098px;top:735px;width:18px;height:17px;background:#5a5a5a"></div>
<div class="a" style="left:1116px;top:735px;width:17px;height:17px;background:#525252"></div>
<div class="a" style="left:1133px;top:735px;width:18px;height:17px;background:#606060"></div>
<div class="a" style="left:1151px;top:735px;width:13px;height:17px;background:#555555"></div>
<div class="a" style="left:1098px;top:752px;width:18px;height:18px;background:#4b4b4b"></div>
<div class="a" style="left:1116px;top:752px;width:17px;height:18px;background:#4b4b4b"></div>
<div class="a" style="left:1133px;top:752px;width:18px;height:18px;background:#4b4b4b"></div>
<div class="a" style="left:1151px;top:752px;width:13px;height:18px;background:#4b4b4b"></div>
<svg class="a" style="left:1158px;top:126px" width="8" height="6" viewBox="0 0 8 6"><path d="M0.5 5 L4 1 L7.5 5 Z" fill="#6c6c6c"/></svg>
<svg class="a" style="left:1159px;top:764px" width="8" height="6" viewBox="0 0 8 6"><path d="M0.5 1 L4 5 L7.5 1 Z" fill="#6c6c6c"/></svg>
<div class="a" style="left:384px;top:772px;width:783px;height:10px;background:#4b4b4b"></div>
<div class="a" style="left:396px;top:774px;width:405px;height:6px;background:#5d5d5d;border-radius:3px"></div>
<svg class="a" style="left:386px;top:773px" width="6" height="8" viewBox="0 0 6 8"><path d="M5 0.5 L1 4 L5 7.5 Z" fill="#5e5e5e"/></svg>
<svg class="a" style="left:1156px;top:773px" width="6" height="8" viewBox="0 0 6 8"><path d="M1 0.5 L5 4 L1 7.5 Z" fill="#5e5e5e"/></svg>
<!--/TABLE-->

</body></html>
